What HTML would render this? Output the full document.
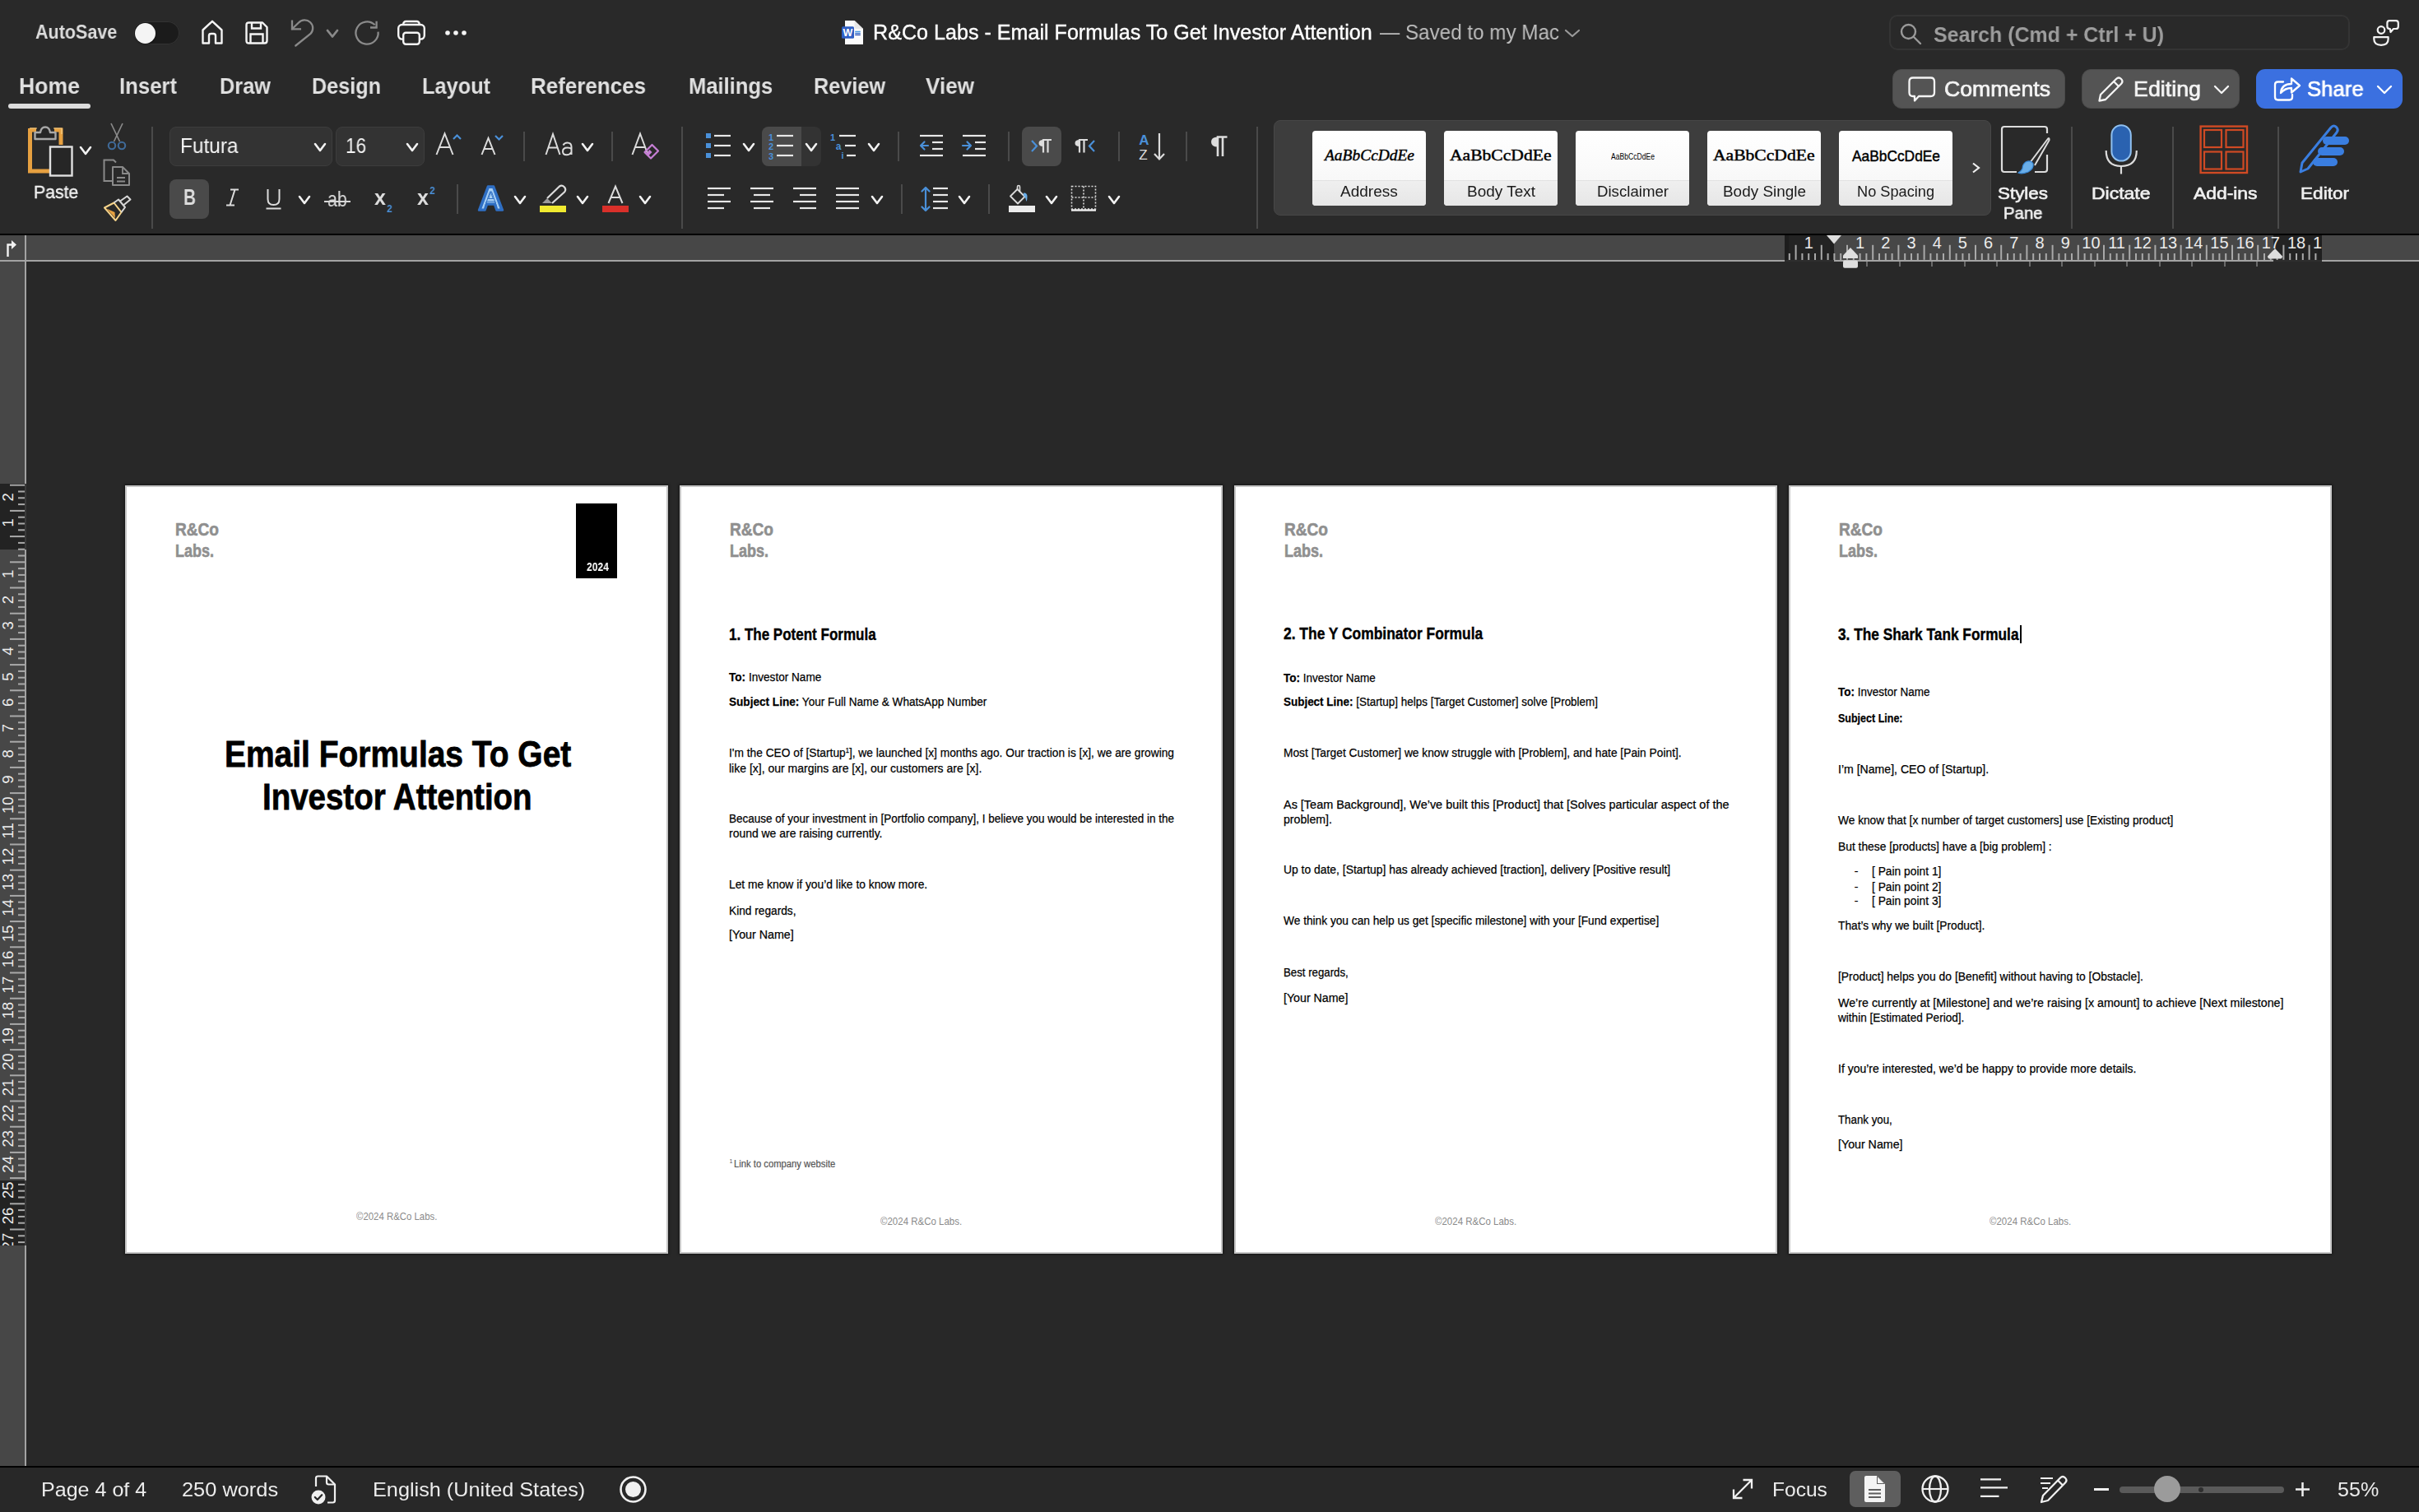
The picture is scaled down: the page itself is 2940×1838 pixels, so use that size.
<!DOCTYPE html><html><head><meta charset="utf-8"><style>

html,body{margin:0;padding:0;}
body{width:2940px;height:1838px;position:relative;overflow:hidden;background:#282828;font-family:'Liberation Sans',sans-serif;}
.t{position:absolute;white-space:nowrap;line-height:1.117em;transform-origin:0 0;will-change:transform;}
.d{will-change:auto;}
svg{overflow:visible}

</style></head><body>
<div style="position:absolute;left:0px;top:0px;width:2940px;height:284px;background:#292929;"></div>
<div style="position:absolute;left:0px;top:284px;width:2940px;height:2px;background:#000;"></div>
<div style="position:absolute;left:0px;top:286px;width:2940px;height:30px;background:#474747;"></div>
<div style="position:absolute;left:0px;top:316px;width:2940px;height:2px;background:#a3a3a3;"></div>
<div style="position:absolute;left:0px;top:318px;width:2940px;height:1464px;background:#282828;"></div>
<div style="position:absolute;left:0px;top:318px;width:30px;height:1464px;background:#474747;"></div>
<div style="position:absolute;left:30px;top:286px;width:2px;height:1496px;background:#a3a3a3;"></div>
<div style="position:absolute;left:0px;top:1782px;width:2940px;height:2px;background:#000;"></div>
<div style="position:absolute;left:0px;top:1784px;width:2940px;height:54px;background:#282828;"></div>
<div style="position:absolute;left:152px;top:590px;width:660px;height:934px;background:transparent;box-shadow:0 0 3px 1px rgba(0,0,0,0.45);"></div>
<div style="position:absolute;left:152px;top:590px;width:660px;height:934px;background:#fff;box-sizing:border-box;border:2px solid #c6c6c6;"></div>
<div style="position:absolute;left:826px;top:590px;width:660px;height:934px;background:transparent;box-shadow:0 0 3px 1px rgba(0,0,0,0.45);"></div>
<div style="position:absolute;left:826px;top:590px;width:660px;height:934px;background:#fff;box-sizing:border-box;border:2px solid #c6c6c6;"></div>
<div style="position:absolute;left:1500px;top:590px;width:660px;height:934px;background:transparent;box-shadow:0 0 3px 1px rgba(0,0,0,0.45);"></div>
<div style="position:absolute;left:1500px;top:590px;width:660px;height:934px;background:#fff;box-sizing:border-box;border:2px solid #c6c6c6;"></div>
<div style="position:absolute;left:2174px;top:590px;width:660px;height:934px;background:transparent;box-shadow:0 0 3px 1px rgba(0,0,0,0.45);"></div>
<div style="position:absolute;left:2174px;top:590px;width:660px;height:934px;background:#fff;box-sizing:border-box;border:2px solid #c6c6c6;"></div>
<div style="position:absolute;left:700px;top:612px;width:50px;height:91px;background:#000;"></div>
<div style="position:absolute;left:2455px;top:760px;width:2px;height:22px;background:#000;"></div>
<div style="position:absolute;left:162px;top:26px;width:56px;height:28px;border-radius:14px;background:#1b1b1b;box-shadow:inset 0 0 0 1px #333"></div>
<div style="position:absolute;left:164px;top:27.5px;width:25px;height:25px;border-radius:50%;background:#f4f4f4;box-shadow:0 1px 2px rgba(0,0,0,.5)"></div>
<svg style="position:absolute;left:244px;top:24px;" width="28" height="30" viewBox="0 0 28 30"><path d="M2.5 28.5 V12.5 L14 1.8 L25.5 12.5 V28.5 H18 V19.5 Q18 17 15.5 17 H12.5 Q10 17 10 19.5 V28.5 Z" fill="none" stroke="#f4f4f4" stroke-width="2.4" stroke-linejoin="round"/></svg>
<svg style="position:absolute;left:298px;top:26px;" width="28" height="28" viewBox="0 0 28 28"><path d="M4 1.5 H21 L26.5 7 V23.5 Q26.5 26.5 23.5 26.5 H4.5 Q1.5 26.5 1.5 23.5 V4.5 Q1.5 1.5 4.5 1.5 Z" fill="none" stroke="#f4f4f4" stroke-width="2.4" stroke-linejoin="round"/><path d="M8 1.5 V8.5 H19 V1.5" fill="none" stroke="#f4f4f4" stroke-width="2.4"/><path d="M6.5 26.5 V15.5 H21.5 V26.5" fill="none" stroke="#f4f4f4" stroke-width="2.4"/></svg>
<svg style="position:absolute;left:354px;top:24px;" width="27" height="33" viewBox="0 0 27 33"><path d="M1 0.5 V11.3 H12" fill="none" stroke="#8a8a8a" stroke-width="2.3"/><path d="M1 11.3 L9 3.5 A9.9 9.9 0 0 1 23.5 17 L5.3 31.5" fill="none" stroke="#8a8a8a" stroke-width="2.3" stroke-linecap="round"/></svg>
<svg style="position:absolute;left:396px;top:35px;" width="16" height="11.5" viewBox="0 0 16 11.5"><path d="M2 2 L8.0 9.5 L14 2" fill="none" stroke="#8a8a8a" stroke-width="2.8" stroke-linecap="round" stroke-linejoin="round"/></svg>
<svg style="position:absolute;left:432px;top:26px;" width="30" height="30" viewBox="0 0 30 30"><path d="M27.6 12.6 A13.6 13.6 0 1 1 23.6 4.3" fill="none" stroke="#8a8a8a" stroke-width="2.3"/><path d="M25.6 -0.3 V7.5 H18" fill="none" stroke="#8a8a8a" stroke-width="2.3"/></svg>
<svg style="position:absolute;left:483px;top:25px;" width="34" height="30" viewBox="0 0 34 30"><rect x="7.3" y="1" width="19.3" height="10" rx="3" fill="none" stroke="#f4f4f4" stroke-width="2.4"/><rect x="1.2" y="5" width="31.6" height="17.6" rx="4.5" fill="#292929" stroke="#f4f4f4" stroke-width="2.4"/><rect x="7.2" y="14.8" width="19.6" height="14" rx="3" fill="#292929" stroke="#f4f4f4" stroke-width="2.4"/></svg>
<svg style="position:absolute;left:540px;top:36px;" width="28" height="8" viewBox="0 0 28 8"><circle cx="4" cy="4" r="2.8" fill="#f4f4f4"/><circle cx="14" cy="4" r="2.8" fill="#f4f4f4"/><circle cx="24" cy="4" r="2.8" fill="#f4f4f4"/></svg>
<svg style="position:absolute;left:1022px;top:24px;" width="28" height="31" viewBox="0 0 28 31"><path d="M5 1 H16.6 L27 11 V30 H5 Z" fill="#fbfbfb"/><path d="M16.6 1 V9 Q16.6 11 18.6 11 H27" fill="#e8e8e8"/><rect x="1" y="8.2" width="15" height="14.6" rx="1.5" fill="#2f5fc4"/><text x="8.5" y="20.2" font-family="Liberation Sans" font-weight="700" font-size="12.5" fill="#fff" text-anchor="middle">W</text><path d="M17.2 14.4 H23.8" stroke="#4a9ae0" stroke-width="1.3"/><path d="M17.2 16.4 H23.8" stroke="#2f6fd0" stroke-width="1.3"/><path d="M17.2 18.4 H23.8" stroke="#2048b0" stroke-width="1.3"/></svg>
<svg style="position:absolute;left:1901px;top:35px;" width="20" height="11" viewBox="0 0 20 11"><path d="M2 2 L10.0 9 L18 2" fill="none" stroke="#9a9a9a" stroke-width="2.2" stroke-linecap="round" stroke-linejoin="round"/></svg>
<div style="position:absolute;left:2296px;top:18px;width:560px;height:43px;box-sizing:border-box;border-radius:10px;border:2px solid #343434;background:#292929"></div>
<svg style="position:absolute;left:2309px;top:28px;" width="27" height="26" viewBox="0 0 27 26"><circle cx="10.5" cy="10.5" r="8.5" fill="none" stroke="#9a9a9a" stroke-width="2.4"/><path d="M16.5 16.5 L25 25" stroke="#9a9a9a" stroke-width="2.4" stroke-linecap="round"/></svg>
<svg style="position:absolute;left:2883px;top:23px;" width="34" height="34" viewBox="0 0 34 34"><circle cx="11" cy="13.5" r="4.3" fill="none" stroke="#f4f4f4" stroke-width="2.2"/><path d="M2.3 22.2 H19.6 V24.5 Q19.6 31.8 11 31.8 Q2.3 31.8 2.3 24.5 Z" fill="none" stroke="#f4f4f4" stroke-width="2.2" stroke-linejoin="round"/><path d="M21 2.1 H29 Q31.8 2.1 31.8 5 V9.2 Q31.8 12 29 12 H26 L22.5 16 L21.8 12 Q18.4 12 18.4 9.2 V5 Q18.4 2.1 21 2.1 Z" fill="none" stroke="#f4f4f4" stroke-width="2.2" stroke-linejoin="round"/></svg>
<div style="position:absolute;left:10px;top:126px;width:100px;height:6px;border-radius:3px;background:#dcdcdc"></div>
<div style="position:absolute;left:2300px;top:84px;width:210px;height:48px;box-sizing:border-box;border-radius:11px;background:#545454;border:1px solid #4a4a4a"></div>
<svg style="position:absolute;left:2319px;top:93px;" width="34" height="32" viewBox="0 0 34 32"><path d="M6 1.5 H27.5 Q32 1.5 32 6 V19.5 Q32 24 27.5 24 H13 L8 29.5 V24 H6 Q1.5 24 1.5 19.5 V6 Q1.5 1.5 6 1.5 Z" fill="none" stroke="#f4f4f4" stroke-width="2.3" stroke-linejoin="round"/></svg>
<div style="position:absolute;left:2530px;top:84px;width:192px;height:48px;box-sizing:border-box;border-radius:11px;background:#545454;border:1px solid #4a4a4a"></div>
<svg style="position:absolute;left:2549px;top:92px;" width="34" height="33" viewBox="0 0 34 33"><path d="M2.5 30.5 L4 23 L23 4 Q26 1 29 4 Q32 7 29 10 L10 29 Z" fill="none" stroke="#f4f4f4" stroke-width="2.3" stroke-linejoin="round"/><path d="M20 7 L26 13" stroke="#f4f4f4" stroke-width="2.3"/></svg>
<svg style="position:absolute;left:2690px;top:103px;" width="20" height="12" viewBox="0 0 20 12"><path d="M2 2 L10.0 10 L18 2" fill="none" stroke="#f4f4f4" stroke-width="2.3" stroke-linecap="round" stroke-linejoin="round"/></svg>
<div style="position:absolute;left:2742px;top:84px;width:178px;height:48px;border-radius:11px;background:#3b70e0"></div>
<svg style="position:absolute;left:2763px;top:91px;" width="34" height="32" viewBox="0 0 34 32"><path d="M12 8.5 H5.5 Q2 8.5 2 12 V27 Q2 30.5 5.5 30.5 H19.5 Q23 30.5 23 27 V24" fill="none" stroke="#fff" stroke-width="2.3" stroke-linecap="round"/><path d="M9 22 Q10 11 22 11 V4.5 L32 13 L22 21.5 V16 Q14 16 9 22 Z" fill="none" stroke="#fff" stroke-width="2.3" stroke-linejoin="round"/></svg>
<svg style="position:absolute;left:2888px;top:103px;" width="20" height="12" viewBox="0 0 20 12"><path d="M2 2 L10.0 10 L18 2" fill="none" stroke="#fff" stroke-width="2.3" stroke-linecap="round" stroke-linejoin="round"/></svg>
<svg style="position:absolute;left:33px;top:153px;" width="58" height="62" viewBox="0 0 58 62">
<path d="M3.5 5 H11 M33 5 H41 V23" fill="none" stroke="#e6a040" stroke-width="5"/>
<path d="M3.5 3 V55 H27" fill="none" stroke="#e6a040" stroke-width="5"/>
<path d="M3 3 H12 M32 3 H42 V10" fill="none" stroke="#f7d089" stroke-width="1.2"/>
<path d="M9.5 16 V8 H16 Q17 1.5 22 1.5 Q27 1.5 28 8 H34.5 V16 Z" fill="#262626" stroke="#a8a8a8" stroke-width="2.4" stroke-linejoin="round"/>
<rect x="28" y="25.5" width="26.5" height="35" fill="#262626" stroke="#e0e0e0" stroke-width="2.4"/>
</svg>
<svg style="position:absolute;left:96px;top:177px;" width="16" height="12" viewBox="0 0 16 12"><path d="M2 2 L8.0 10 L14 2" fill="none" stroke="#f2f2f2" stroke-width="2.6" stroke-linecap="round" stroke-linejoin="round"/></svg>
<svg style="position:absolute;left:130px;top:149px;" width="24" height="34" viewBox="0 0 24 34"><path d="M5 1 L15.5 23 M19 1 L8.5 23" stroke="#8a8a8a" stroke-width="1.7"/><circle cx="6" cy="28" r="4.2" fill="none" stroke="#3f6a98" stroke-width="2.1"/><circle cx="18" cy="28" r="4.2" fill="none" stroke="#3f6a98" stroke-width="2.1"/></svg>
<svg style="position:absolute;left:125px;top:193px;" width="34" height="34" viewBox="0 0 34 34"><path d="M13 27 H1.5 V1.5 H13 L16 4.5" fill="none" stroke="#8a8a8a" stroke-width="2"/><path d="M12 10 H24 L32 18 V32 H12 Z" fill="none" stroke="#8a8a8a" stroke-width="2" stroke-linejoin="round"/><path d="M24 10 V18 H32 M17 23 H27 M17 27.5 H27" fill="none" stroke="#8a8a8a" stroke-width="1.8"/></svg>
<svg style="position:absolute;left:125px;top:237px;" width="35" height="33" viewBox="0 0 35 33"><path d="M2 15.5 L13.5 9.5 L22.5 21 L15.5 31 Z" fill="none" stroke="#f5d38a" stroke-width="2" stroke-linejoin="round"/><path d="M4.5 16.5 L14.5 21 L15 28 Z" fill="#e6a040"/><path d="M13.5 9.5 L19 5.5 L27 15 L22.5 21" fill="none" stroke="#d8d8d8" stroke-width="2" stroke-linejoin="round"/><path d="M21 7.5 L29.5 1.5 L33.5 5.5 L25 12.5" fill="none" stroke="#d8d8d8" stroke-width="2" stroke-linejoin="round"/></svg>
<div style="position:absolute;left:184px;top:154px;width:2px;height:124px;background:#4a4a4a;"></div>
<div style="position:absolute;left:206px;top:154px;width:198px;height:48px;box-sizing:border-box;border-radius:8px;background:#333333;border:1px solid #3d3d3d"></div>
<svg style="position:absolute;left:381px;top:173px;" width="16" height="12" viewBox="0 0 16 12"><path d="M2 2 L8.0 10 L14 2" fill="none" stroke="#f2f2f2" stroke-width="2.6" stroke-linecap="round" stroke-linejoin="round"/></svg>
<div style="position:absolute;left:408px;top:154px;width:108px;height:48px;box-sizing:border-box;border-radius:8px;background:#333333;border:1px solid #3d3d3d"></div>
<svg style="position:absolute;left:493px;top:173px;" width="16" height="12" viewBox="0 0 16 12"><path d="M2 2 L8.0 10 L14 2" fill="none" stroke="#f2f2f2" stroke-width="2.6" stroke-linecap="round" stroke-linejoin="round"/></svg>
<svg style="position:absolute;left:529px;top:161px;" width="34" height="28" viewBox="0 0 34 28"><path d="M1.5 27 L11.5 1.5 L21.5 27 M5.5 18 H17.5" fill="none" stroke="#dcdcdc" stroke-width="2"/><path d="M22 8 L26.5 3.5 L31 8" fill="none" stroke="#4a90d9" stroke-width="2.2"/></svg>
<svg style="position:absolute;left:584px;top:163px;" width="30" height="26" viewBox="0 0 30 26"><path d="M1.5 25 L9.5 5 L17.5 25 M4.8 18 H14.2" fill="none" stroke="#dcdcdc" stroke-width="2"/><path d="M18 2 L22.5 6.5 L27 2" fill="none" stroke="#4a90d9" stroke-width="2.2"/></svg>
<div style="position:absolute;left:636px;top:160px;width:2px;height:36px;background:#4a4a4a;"></div>
<svg style="position:absolute;left:662px;top:161px;" width="34" height="28" viewBox="0 0 34 28"><path d="M1.5 27 L10 2 L18.5 27 M4.5 18.5 H15.5" fill="none" stroke="#dcdcdc" stroke-width="2"/><path d="M22.5 15.5 Q24 12.5 27.5 12.5 Q32.5 12.5 32.5 17.5 V27 M32.5 20 Q31 18.5 27.5 18.5 Q22 18.5 22 23 Q22 27.3 26.5 27.3 Q30.5 27.3 32.5 24" fill="none" stroke="#dcdcdc" stroke-width="2"/></svg>
<svg style="position:absolute;left:706px;top:173px;" width="16" height="12" viewBox="0 0 16 12"><path d="M2 2 L8.0 10 L14 2" fill="none" stroke="#f2f2f2" stroke-width="2.6" stroke-linecap="round" stroke-linejoin="round"/></svg>
<div style="position:absolute;left:743px;top:160px;width:2px;height:36px;background:#4a4a4a;"></div>
<svg style="position:absolute;left:767px;top:161px;" width="35" height="34" viewBox="0 0 35 34"><path d="M1.5 27 L11 1.5 L20.5 27 M5 18 H17" fill="none" stroke="#dcdcdc" stroke-width="2"/><path d="M16.5 24 L25.5 15 L33 22.5 L24 31.5 Z" fill="none" stroke="#c77fd6" stroke-width="2.2" stroke-linejoin="round"/><path d="M18 25.5 L22.5 21 L25.5 24 L21 28.5 Z" fill="#c77fd6"/></svg>
<div style="position:absolute;left:206px;top:218px;width:48px;height:48px;border-radius:8px;background:#4a4a4a"></div>
<svg style="position:absolute;left:274px;top:229px;" width="17" height="22" viewBox="0 0 17 22"><path d="M6 1.5 H16 M1 20.5 H11 M11.5 1.5 L5.5 20.5" fill="none" stroke="#dcdcdc" stroke-width="2"/></svg>
<svg style="position:absolute;left:323px;top:229px;" width="20" height="26" viewBox="0 0 20 26"><path d="M2.5 1 V13 Q2.5 20 9.5 20 Q16.5 20 16.5 13 V1" fill="none" stroke="#dcdcdc" stroke-width="2"/><path d="M0.5 24.5 H18.5" stroke="#dcdcdc" stroke-width="2"/></svg>
<svg style="position:absolute;left:362px;top:237px;" width="16" height="12" viewBox="0 0 16 12"><path d="M2 2 L8.0 10 L14 2" fill="none" stroke="#f2f2f2" stroke-width="2.6" stroke-linecap="round" stroke-linejoin="round"/></svg>
<div style="position:absolute;left:393.8px;top:244px;width:32.3px;height:2px;background:#d8d8d8;"></div>
<div style="position:absolute;left:555px;top:224px;width:2px;height:36px;background:#4a4a4a;"></div>
<svg style="position:absolute;left:580px;top:225px;" width="33" height="32" viewBox="0 0 33 32"><path d="M2 30.5 L13 1.5 H20 L31 30.5 H23.5 L21 23.5 H12 L9.5 30.5 Z" fill="#2f6fc4" stroke="#2f6fc4" stroke-width="2.4" stroke-linejoin="round"/><path d="M5.5 28.5 L14.5 4 H18.5 L27.5 28.5 H25 L22.5 21.5 H10.5 L8 28.5 Z" fill="#a8d0f5"/><path d="M9 27 L15.5 8 H17.5 L24 27 H23.5 L21.8 20 H11.2 L9.5 27 Z" fill="none" stroke="#2f6fc4" stroke-width="1"/><path d="M13 17 L16.5 7.5 L20 17 Z" fill="#2f6fc4"/><path d="M14.3 16 L16.5 10 L18.7 16 Z" fill="#a8d0f5"/></svg>
<svg style="position:absolute;left:624px;top:237px;" width="16" height="12" viewBox="0 0 16 12"><path d="M2 2 L8.0 10 L14 2" fill="none" stroke="#f2f2f2" stroke-width="2.6" stroke-linecap="round" stroke-linejoin="round"/></svg>
<svg style="position:absolute;left:655px;top:225px;" width="34" height="34" viewBox="0 0 34 34"><path d="M4 22 L10 16 L16 22 Z" fill="#9a9a9a"/><path d="M10 16 L25 1.5 Q28 -0.5 31 2.5 Q33.5 5.5 31 8.5 L16 22" fill="none" stroke="#dcdcdc" stroke-width="2.2" stroke-linejoin="round"/><rect x="1" y="25" width="32" height="8" fill="#f0ea30"/></svg>
<svg style="position:absolute;left:700px;top:237px;" width="16" height="12" viewBox="0 0 16 12"><path d="M2 2 L8.0 10 L14 2" fill="none" stroke="#f2f2f2" stroke-width="2.6" stroke-linecap="round" stroke-linejoin="round"/></svg>
<svg style="position:absolute;left:731px;top:225px;" width="34" height="34" viewBox="0 0 34 34"><path d="M8.5 22 L17 1.5 L25.5 22 M11.5 15 H22.5" fill="none" stroke="#dcdcdc" stroke-width="2"/><rect x="1" y="25" width="32" height="8" fill="#d9302a"/></svg>
<svg style="position:absolute;left:776px;top:237px;" width="16" height="12" viewBox="0 0 16 12"><path d="M2 2 L8.0 10 L14 2" fill="none" stroke="#f2f2f2" stroke-width="2.6" stroke-linecap="round" stroke-linejoin="round"/></svg>
<div style="position:absolute;left:828px;top:154px;width:2px;height:124px;background:#4a4a4a;"></div>
<svg style="position:absolute;left:857px;top:162px;" width="32" height="30" viewBox="0 0 32 30"><rect x="1" y="0" width="6" height="6" fill="#4a90d9"/><path d="M11 3 H31" stroke="#e8e8e8" stroke-width="2.2"/><rect x="1" y="12" width="6" height="6" fill="#4a90d9"/><path d="M11 15 H31" stroke="#e8e8e8" stroke-width="2.2"/><rect x="1" y="24" width="6" height="6" fill="#4a90d9"/><path d="M11 27 H31" stroke="#e8e8e8" stroke-width="2.2"/></svg>
<svg style="position:absolute;left:902px;top:173px;" width="16" height="12" viewBox="0 0 16 12"><path d="M2 2 L8.0 10 L14 2" fill="none" stroke="#f2f2f2" stroke-width="2.6" stroke-linecap="round" stroke-linejoin="round"/></svg>
<div style="position:absolute;left:926px;top:154px;width:72px;height:48px;border-radius:8px;background:#333333"></div>
<div style="position:absolute;left:926px;top:154px;width:48px;height:48px;border-radius:8px 0 0 8px;background:#4a4a4a"></div>
<svg style="position:absolute;left:932px;top:160px;" width="34" height="36" viewBox="0 0 34 36"><text x="5" y="10.5" font-family="Liberation Sans" font-size="11" font-weight="700" fill="#4a90d9" text-anchor="middle">1</text><text x="5" y="22" font-family="Liberation Sans" font-size="11" font-weight="700" fill="#4a90d9" text-anchor="middle">2</text><text x="5" y="33.5" font-family="Liberation Sans" font-size="11" font-weight="700" fill="#4a90d9" text-anchor="middle">3</text><path d="M12 5 H32" stroke="#e8e8e8" stroke-width="2.2"/><path d="M12 17 H32" stroke="#e8e8e8" stroke-width="2.2"/><path d="M12 29 H32" stroke="#e8e8e8" stroke-width="2.2"/></svg>
<svg style="position:absolute;left:978px;top:173px;" width="16" height="12" viewBox="0 0 16 12"><path d="M2 2 L8.0 10 L14 2" fill="none" stroke="#f2f2f2" stroke-width="2.6" stroke-linecap="round" stroke-linejoin="round"/></svg>
<svg style="position:absolute;left:1008px;top:160px;" width="34" height="36" viewBox="0 0 34 36"><text x="4" y="10.5" font-family="Liberation Sans" font-size="11" font-weight="700" fill="#4a90d9" text-anchor="middle">1</text><text x="11" y="21.5" font-family="Liberation Sans" font-size="12" font-weight="700" fill="#4a90d9" text-anchor="middle">a</text><text x="16" y="32.5" font-family="Liberation Sans" font-size="11" font-weight="700" fill="#4a90d9" text-anchor="middle">i</text><path d="M12 5 H32" stroke="#e8e8e8" stroke-width="2.2"/><path d="M19 17 H32" stroke="#e8e8e8" stroke-width="2.2"/><path d="M21 29 H32" stroke="#e8e8e8" stroke-width="2.2"/></svg>
<svg style="position:absolute;left:1054px;top:173px;" width="16" height="12" viewBox="0 0 16 12"><path d="M2 2 L8.0 10 L14 2" fill="none" stroke="#f2f2f2" stroke-width="2.6" stroke-linecap="round" stroke-linejoin="round"/></svg>
<div style="position:absolute;left:1091px;top:160px;width:2px;height:36px;background:#4a4a4a;"></div>
<svg style="position:absolute;left:1117px;top:162px;" width="30" height="30" viewBox="0 0 30 30"><path d="M1 3 H29" stroke="#e8e8e8" stroke-width="2.2"/><path d="M1 27 H29" stroke="#e8e8e8" stroke-width="2.2"/><path d="M16 11 H29" stroke="#e8e8e8" stroke-width="2.2"/><path d="M16 19 H29" stroke="#e8e8e8" stroke-width="2.2"/><path d="M11 15 H2 M6.5 10.5 L2 15 L6.5 19.5" fill="none" stroke="#4a90d9" stroke-width="2.2" stroke-linecap="round" stroke-linejoin="round"/></svg>
<svg style="position:absolute;left:1169px;top:162px;" width="30" height="30" viewBox="0 0 30 30"><path d="M1 3 H29" stroke="#e8e8e8" stroke-width="2.2"/><path d="M1 27 H29" stroke="#e8e8e8" stroke-width="2.2"/><path d="M16 11 H29" stroke="#e8e8e8" stroke-width="2.2"/><path d="M16 19 H29" stroke="#e8e8e8" stroke-width="2.2"/><path d="M1 15 H11 M6.5 10.5 L11 15 L6.5 19.5" fill="none" stroke="#4a90d9" stroke-width="2.2" stroke-linecap="round" stroke-linejoin="round"/></svg>
<div style="position:absolute;left:1225px;top:160px;width:2px;height:36px;background:#4a4a4a;"></div>
<div style="position:absolute;left:1242px;top:154px;width:48px;height:48px;border-radius:8px;background:#4a4a4a"></div>
<svg style="position:absolute;left:1252px;top:168px;" width="28" height="20" viewBox="0 0 28 20"><path d="M2 3 L8 9.5 L2 16" fill="none" stroke="#4a90d9" stroke-width="2.2"/><path d="M16 17.5 V2 H26 M21.5 2 V17.5" fill="none" stroke="#dcdcdc" stroke-width="2.2"/><path d="M16 2 Q10.5 2 10.5 6 Q10.5 10 16 10 Z" fill="#dcdcdc"/></svg>
<svg style="position:absolute;left:1305px;top:168px;" width="28" height="20" viewBox="0 0 28 20"><path d="M7 17.5 V2 H17 M12.5 2 V17.5" fill="none" stroke="#dcdcdc" stroke-width="2.2"/><path d="M7 2 Q1.5 2 1.5 6 Q1.5 10 7 10 Z" fill="#dcdcdc"/><path d="M25 3 L19 9.5 L25 16" fill="none" stroke="#4a90d9" stroke-width="2.2"/></svg>
<div style="position:absolute;left:1359px;top:160px;width:2px;height:36px;background:#4a4a4a;"></div>
<svg style="position:absolute;left:1383px;top:161px;" width="35" height="34" viewBox="0 0 35 34"><text x="7.5" y="15" font-family="Liberation Sans" font-size="17" font-weight="700" fill="#4a90d9" text-anchor="middle">A</text><text x="6.5" y="33" font-family="Liberation Sans" font-size="17" fill="#dcdcdc" text-anchor="middle">Z</text><path d="M26 1 V32 M20 26 L26 32.5 L32 26" fill="none" stroke="#dcdcdc" stroke-width="2.2"/></svg>
<div style="position:absolute;left:1441px;top:160px;width:2px;height:36px;background:#4a4a4a;"></div>
<svg style="position:absolute;left:1471px;top:165px;" width="22" height="26" viewBox="0 0 22 26"><path d="M9 25 V1.5 H20.5 M15 1.5 V25" fill="none" stroke="#dcdcdc" stroke-width="2.6"/><path d="M9 1.5 Q1 1.5 1 7.5 Q1 13.5 9 13.5 Z" fill="#dcdcdc"/></svg>
<svg style="position:absolute;left:860px;top:227px;" width="28" height="28" viewBox="0 0 28 28"><path d="M0 2 H28" stroke="#e8e8e8" stroke-width="2.2"/><path d="M0 10 H20" stroke="#e8e8e8" stroke-width="2.2"/><path d="M0 18 H28" stroke="#e8e8e8" stroke-width="2.2"/><path d="M0 26 H20" stroke="#e8e8e8" stroke-width="2.2"/></svg>
<svg style="position:absolute;left:912px;top:227px;" width="28" height="28" viewBox="0 0 28 28"><path d="M0 2 H28" stroke="#e8e8e8" stroke-width="2.2"/><path d="M4 10 H24" stroke="#e8e8e8" stroke-width="2.2"/><path d="M0 18 H28" stroke="#e8e8e8" stroke-width="2.2"/><path d="M4 26 H24" stroke="#e8e8e8" stroke-width="2.2"/></svg>
<svg style="position:absolute;left:964px;top:227px;" width="28" height="28" viewBox="0 0 28 28"><path d="M0 2 H28" stroke="#e8e8e8" stroke-width="2.2"/><path d="M8 10 H28" stroke="#e8e8e8" stroke-width="2.2"/><path d="M0 18 H28" stroke="#e8e8e8" stroke-width="2.2"/><path d="M8 26 H28" stroke="#e8e8e8" stroke-width="2.2"/></svg>
<svg style="position:absolute;left:1016px;top:227px;" width="28" height="28" viewBox="0 0 28 28"><path d="M0 2 H28" stroke="#e8e8e8" stroke-width="2.2"/><path d="M0 10 H28" stroke="#e8e8e8" stroke-width="2.2"/><path d="M0 18 H28" stroke="#e8e8e8" stroke-width="2.2"/><path d="M0 26 H28" stroke="#e8e8e8" stroke-width="2.2"/></svg>
<svg style="position:absolute;left:1058px;top:237px;" width="16" height="12" viewBox="0 0 16 12"><path d="M2 2 L8.0 10 L14 2" fill="none" stroke="#f2f2f2" stroke-width="2.6" stroke-linecap="round" stroke-linejoin="round"/></svg>
<div style="position:absolute;left:1095px;top:224px;width:2px;height:36px;background:#4a4a4a;"></div>
<svg style="position:absolute;left:1119px;top:226px;" width="34" height="32" viewBox="0 0 34 32"><path d="M6 2 V30 M1.5 6.5 L6 2 L10.5 6.5 M1.5 25.5 L6 30 L10.5 25.5" fill="none" stroke="#4a90d9" stroke-width="2.2" stroke-linecap="round" stroke-linejoin="round"/><path d="M15 3 H33" stroke="#e8e8e8" stroke-width="2.2"/><path d="M15 11 H33" stroke="#e8e8e8" stroke-width="2.2"/><path d="M15 19 H33" stroke="#e8e8e8" stroke-width="2.2"/><path d="M15 27 H33" stroke="#e8e8e8" stroke-width="2.2"/></svg>
<svg style="position:absolute;left:1164px;top:237px;" width="16" height="12" viewBox="0 0 16 12"><path d="M2 2 L8.0 10 L14 2" fill="none" stroke="#f2f2f2" stroke-width="2.6" stroke-linecap="round" stroke-linejoin="round"/></svg>
<div style="position:absolute;left:1201px;top:224px;width:2px;height:36px;background:#4a4a4a;"></div>
<svg style="position:absolute;left:1225px;top:225px;" width="34" height="34" viewBox="0 0 34 34"><path d="M3 13.5 L11.5 5 L20.5 14 L12 22.5 Z" fill="none" stroke="#dcdcdc" stroke-width="1.8" stroke-linejoin="round"/><path d="M11.5 5 V2 Q11.5 0.5 13 0.5 Q14.5 0.5 14.5 2 V9" fill="none" stroke="#dcdcdc" stroke-width="1.6"/><path d="M19 9.5 Q23.5 9 23.5 14 Q23.5 18 22.5 20 Q21.5 15 19 12.5 Z" fill="#6aaee8"/><rect x="1" y="25" width="32" height="8" fill="#ececec"/></svg>
<svg style="position:absolute;left:1270px;top:237px;" width="16" height="12" viewBox="0 0 16 12"><path d="M2 2 L8.0 10 L14 2" fill="none" stroke="#f2f2f2" stroke-width="2.6" stroke-linecap="round" stroke-linejoin="round"/></svg>
<svg style="position:absolute;left:1301px;top:225px;" width="32" height="33" viewBox="0 0 32 33"><rect x="1.5" y="1.5" width="29" height="27.5" fill="none" stroke="#dcdcdc" stroke-width="1.6" stroke-dasharray="2 2"/><path d="M16 1.5 V29 M1.5 15 H30.5" stroke="#dcdcdc" stroke-width="1.6" stroke-dasharray="2 2"/><path d="M1 30.5 H31" stroke="#f0f0f0" stroke-width="2.4"/></svg>
<svg style="position:absolute;left:1346px;top:237px;" width="16" height="12" viewBox="0 0 16 12"><path d="M2 2 L8.0 10 L14 2" fill="none" stroke="#f2f2f2" stroke-width="2.6" stroke-linecap="round" stroke-linejoin="round"/></svg>
<div style="position:absolute;left:1527px;top:154px;width:2px;height:124px;background:#4a4a4a;"></div>
<div style="position:absolute;left:1548px;top:146px;width:872px;height:116px;box-sizing:border-box;border-radius:8px;background:#3d3d3d;border:1px solid #474747"></div>
<div style="position:absolute;left:1595px;top:159px;width:138px;height:91px;border-radius:4px;background:linear-gradient(#ffffff,#fafafa 50%,#f3f3f3);overflow:hidden"><div style="position:absolute;left:0;top:60px;width:138px;height:31px;background:linear-gradient(#efefef,#e6e6e6);border-top:1px solid #e2e2e2"></div></div>
<div style="position:absolute;left:1755px;top:159px;width:138px;height:91px;border-radius:4px;background:linear-gradient(#ffffff,#fafafa 50%,#f3f3f3);overflow:hidden"><div style="position:absolute;left:0;top:60px;width:138px;height:31px;background:linear-gradient(#efefef,#e6e6e6);border-top:1px solid #e2e2e2"></div></div>
<div style="position:absolute;left:1915px;top:159px;width:138px;height:91px;border-radius:4px;background:linear-gradient(#ffffff,#fafafa 50%,#f3f3f3);overflow:hidden"><div style="position:absolute;left:0;top:60px;width:138px;height:31px;background:linear-gradient(#efefef,#e6e6e6);border-top:1px solid #e2e2e2"></div></div>
<div style="position:absolute;left:2075px;top:159px;width:138px;height:91px;border-radius:4px;background:linear-gradient(#ffffff,#fafafa 50%,#f3f3f3);overflow:hidden"><div style="position:absolute;left:0;top:60px;width:138px;height:31px;background:linear-gradient(#efefef,#e6e6e6);border-top:1px solid #e2e2e2"></div></div>
<div style="position:absolute;left:2235px;top:159px;width:138px;height:91px;border-radius:4px;background:linear-gradient(#ffffff,#fafafa 50%,#f3f3f3);overflow:hidden"><div style="position:absolute;left:0;top:60px;width:138px;height:31px;background:linear-gradient(#efefef,#e6e6e6);border-top:1px solid #e2e2e2"></div></div>
<svg style="position:absolute;left:2396px;top:197px;" width="12" height="14" viewBox="0 0 12 14"><path d="M2 1.5 L9 7 L2 12.5" fill="none" stroke="#f0f0f0" stroke-width="2.2"/></svg>
<svg style="position:absolute;left:2431px;top:152px;" width="62" height="63" viewBox="0 0 62 63"><path d="M5 2 H54 Q57 2 57 5 V10" fill="none" stroke="#dcdcdc" stroke-width="2.2"/><path d="M2 5 Q2 2 5 2 M2 5 V54 Q2 57 5 57 H20 M42 57 H54 Q57 57 57 54 V36" fill="none" stroke="#dcdcdc" stroke-width="2.2"/><path d="M36 46 L57 18 Q60 14 59.5 18.5 L42 49" fill="none" stroke="#dcdcdc" stroke-width="2"/><path d="M22 58 Q26 60 34 57 Q41 53 40 47 Q37 42 31 45 Q27 48 27 53 Q26 56 22 58 Z" fill="#6aaee8" stroke="#3a8ad8" stroke-width="1.2"/></svg>
<div style="position:absolute;left:2517px;top:154px;width:2px;height:124px;background:#4a4a4a;"></div>
<svg style="position:absolute;left:2558px;top:150px;" width="40" height="64" viewBox="0 0 40 64"><rect x="8.4" y="2.2" width="23.4" height="43.4" rx="11.7" fill="#2a62b0" stroke="#8fc0f0" stroke-width="2"/><path d="M1.7 33 Q1.7 52 20 52 Q38.8 52 38.8 33" fill="none" stroke="#dcdcdc" stroke-width="2.2"/><path d="M20 52 V61.5" stroke="#dcdcdc" stroke-width="2.2"/></svg>
<div style="position:absolute;left:2640px;top:154px;width:2px;height:124px;background:#4a4a4a;"></div>
<svg style="position:absolute;left:2673px;top:152px;" width="60" height="60" viewBox="0 0 60 60"><rect x="1.6" y="1.6" width="56.4" height="56.4" fill="none" stroke="#d04a24" stroke-width="2.4"/><rect x="6" y="6" width="21" height="21" fill="none" stroke="#d04a24" stroke-width="2.2"/><rect x="32.5" y="6" width="21" height="21" fill="none" stroke="#d04a24" stroke-width="2.2"/><rect x="6" y="32.5" width="21" height="21" fill="none" stroke="#d04a24" stroke-width="2.2"/><rect x="32.5" y="32.5" width="21" height="21" fill="none" stroke="#d04a24" stroke-width="2.2"/></svg>
<div style="position:absolute;left:2768px;top:154px;width:2px;height:124px;background:#4a4a4a;"></div>
<svg style="position:absolute;left:2793px;top:150px;" width="64" height="64" viewBox="0 0 64 64"><path d="M3 59 L5 48 L40 5 Q43 1.5 46.5 4.5 Q49.5 7.5 47 11 L12 55 Z" fill="none" stroke="#3a7ee0" stroke-width="3" stroke-linejoin="round"/><rect x="30" y="16" width="32" height="10" rx="5" fill="#3a7ee0"/><rect x="24" y="29" width="32" height="10" rx="5" fill="#3a7ee0"/><rect x="18" y="42" width="30" height="10" rx="5" fill="#3a7ee0"/></svg>
<div style="position:absolute;left:2168.6px;top:286px;width:60.8px;height:30px;background:#232323;"></div>
<div style="position:absolute;left:2168.6px;top:286px;width:5px;height:30px;background:#1d1d1d;"></div>
<div style="position:absolute;left:2224.4px;top:286px;width:5px;height:30px;background:#1f1f1f;"></div>
<div style="position:absolute;left:2763.4px;top:286px;width:58.9px;height:30px;background:#232323;"></div>
<div style="position:absolute;left:2817px;top:286px;width:5.3px;height:30px;background:#1f1f1f;"></div>
<div style="position:absolute;left:2168.6px;top:316px;width:60.8px;height:2px;background:#2e2e2e;"></div>
<div style="position:absolute;left:2763.4px;top:316px;width:58.9px;height:2px;background:#2e2e2e;"></div>
<svg style="position:absolute;left:2168px;top:286px;overflow:hidden" width="656" height="30" viewBox="0 0 656 30"><rect x="5.8" y="22" width="2" height="8" fill="#a9a9a9"/><rect x="13.6" y="11.8" width="2" height="18" fill="#a9a9a9"/><rect x="21.4" y="22" width="2" height="8" fill="#a9a9a9"/><rect x="29.2" y="22" width="2" height="8" fill="#a9a9a9"/><rect x="37.0" y="22" width="2" height="8" fill="#a9a9a9"/><rect x="44.8" y="11.8" width="2" height="18" fill="#a9a9a9"/><rect x="52.6" y="22" width="2" height="8" fill="#a9a9a9"/><rect x="60.4" y="22" width="2" height="8" fill="#a9a9a9"/><rect x="68.2" y="22" width="2" height="8" fill="#a9a9a9"/><rect x="76.0" y="11.8" width="2" height="18" fill="#a9a9a9"/><rect x="83.8" y="22" width="2" height="8" fill="#a9a9a9"/><rect x="91.6" y="22" width="2" height="8" fill="#a9a9a9"/><rect x="99.4" y="22" width="2" height="8" fill="#a9a9a9"/><rect x="107.2" y="11.8" width="2" height="18" fill="#a9a9a9"/><rect x="115.0" y="22" width="2" height="8" fill="#a9a9a9"/><rect x="122.8" y="22" width="2" height="8" fill="#a9a9a9"/><rect x="130.6" y="22" width="2" height="8" fill="#a9a9a9"/><rect x="138.4" y="11.8" width="2" height="18" fill="#a9a9a9"/><rect x="146.2" y="22" width="2" height="8" fill="#a9a9a9"/><rect x="154.0" y="22" width="2" height="8" fill="#a9a9a9"/><rect x="161.8" y="22" width="2" height="8" fill="#a9a9a9"/><rect x="169.6" y="11.8" width="2" height="18" fill="#a9a9a9"/><rect x="177.4" y="22" width="2" height="8" fill="#a9a9a9"/><rect x="185.2" y="22" width="2" height="8" fill="#a9a9a9"/><rect x="193.0" y="22" width="2" height="8" fill="#a9a9a9"/><rect x="200.8" y="11.8" width="2" height="18" fill="#a9a9a9"/><rect x="208.6" y="22" width="2" height="8" fill="#a9a9a9"/><rect x="216.4" y="22" width="2" height="8" fill="#a9a9a9"/><rect x="224.2" y="22" width="2" height="8" fill="#a9a9a9"/><rect x="232.0" y="11.8" width="2" height="18" fill="#a9a9a9"/><rect x="239.8" y="22" width="2" height="8" fill="#a9a9a9"/><rect x="247.6" y="22" width="2" height="8" fill="#a9a9a9"/><rect x="255.4" y="22" width="2" height="8" fill="#a9a9a9"/><rect x="263.2" y="11.8" width="2" height="18" fill="#a9a9a9"/><rect x="271.0" y="22" width="2" height="8" fill="#a9a9a9"/><rect x="278.8" y="22" width="2" height="8" fill="#a9a9a9"/><rect x="286.6" y="22" width="2" height="8" fill="#a9a9a9"/><rect x="294.4" y="11.8" width="2" height="18" fill="#a9a9a9"/><rect x="302.2" y="22" width="2" height="8" fill="#a9a9a9"/><rect x="310.0" y="22" width="2" height="8" fill="#a9a9a9"/><rect x="317.8" y="22" width="2" height="8" fill="#a9a9a9"/><rect x="325.6" y="11.8" width="2" height="18" fill="#a9a9a9"/><rect x="333.4" y="22" width="2" height="8" fill="#a9a9a9"/><rect x="341.2" y="22" width="2" height="8" fill="#a9a9a9"/><rect x="349.0" y="22" width="2" height="8" fill="#a9a9a9"/><rect x="356.8" y="11.8" width="2" height="18" fill="#a9a9a9"/><rect x="364.6" y="22" width="2" height="8" fill="#a9a9a9"/><rect x="372.4" y="22" width="2" height="8" fill="#a9a9a9"/><rect x="380.2" y="22" width="2" height="8" fill="#a9a9a9"/><rect x="388.0" y="11.8" width="2" height="18" fill="#a9a9a9"/><rect x="395.8" y="22" width="2" height="8" fill="#a9a9a9"/><rect x="403.6" y="22" width="2" height="8" fill="#a9a9a9"/><rect x="411.4" y="22" width="2" height="8" fill="#a9a9a9"/><rect x="419.2" y="11.8" width="2" height="18" fill="#a9a9a9"/><rect x="427.0" y="22" width="2" height="8" fill="#a9a9a9"/><rect x="434.8" y="22" width="2" height="8" fill="#a9a9a9"/><rect x="442.6" y="22" width="2" height="8" fill="#a9a9a9"/><rect x="450.4" y="11.8" width="2" height="18" fill="#a9a9a9"/><rect x="458.2" y="22" width="2" height="8" fill="#a9a9a9"/><rect x="466.0" y="22" width="2" height="8" fill="#a9a9a9"/><rect x="473.8" y="22" width="2" height="8" fill="#a9a9a9"/><rect x="481.6" y="11.8" width="2" height="18" fill="#a9a9a9"/><rect x="489.4" y="22" width="2" height="8" fill="#a9a9a9"/><rect x="497.2" y="22" width="2" height="8" fill="#a9a9a9"/><rect x="505.0" y="22" width="2" height="8" fill="#a9a9a9"/><rect x="512.8" y="11.8" width="2" height="18" fill="#a9a9a9"/><rect x="520.6" y="22" width="2" height="8" fill="#a9a9a9"/><rect x="528.4" y="22" width="2" height="8" fill="#a9a9a9"/><rect x="536.2" y="22" width="2" height="8" fill="#a9a9a9"/><rect x="544.0" y="11.8" width="2" height="18" fill="#a9a9a9"/><rect x="551.8" y="22" width="2" height="8" fill="#a9a9a9"/><rect x="559.6" y="22" width="2" height="8" fill="#a9a9a9"/><rect x="567.4" y="22" width="2" height="8" fill="#a9a9a9"/><rect x="575.2" y="11.8" width="2" height="18" fill="#a9a9a9"/><rect x="583.0" y="22" width="2" height="8" fill="#a9a9a9"/><rect x="590.8" y="22" width="2" height="8" fill="#a9a9a9"/><rect x="598.6" y="22" width="2" height="8" fill="#a9a9a9"/><rect x="606.4" y="11.8" width="2" height="18" fill="#a9a9a9"/><rect x="614.2" y="22" width="2" height="8" fill="#a9a9a9"/><rect x="622.0" y="22" width="2" height="8" fill="#a9a9a9"/><rect x="629.8" y="22" width="2" height="8" fill="#a9a9a9"/><rect x="637.6" y="11.8" width="2" height="18" fill="#a9a9a9"/><rect x="645.4" y="22" width="2" height="8" fill="#a9a9a9"/></svg>
<svg style="position:absolute;left:2168px;top:286px;overflow:hidden" width="654.3" height="30" viewBox="0 0 654.3 30"><text x="30.2" y="16" font-family="Liberation Sans" font-size="20" fill="#ececec" text-anchor="middle">1</text><text x="92.6" y="16" font-family="Liberation Sans" font-size="20" fill="#ececec" text-anchor="middle">1</text><text x="123.8" y="16" font-family="Liberation Sans" font-size="20" fill="#ececec" text-anchor="middle">2</text><text x="155.0" y="16" font-family="Liberation Sans" font-size="20" fill="#ececec" text-anchor="middle">3</text><text x="186.2" y="16" font-family="Liberation Sans" font-size="20" fill="#ececec" text-anchor="middle">4</text><text x="217.4" y="16" font-family="Liberation Sans" font-size="20" fill="#ececec" text-anchor="middle">5</text><text x="248.6" y="16" font-family="Liberation Sans" font-size="20" fill="#ececec" text-anchor="middle">6</text><text x="279.8" y="16" font-family="Liberation Sans" font-size="20" fill="#ececec" text-anchor="middle">7</text><text x="311.0" y="16" font-family="Liberation Sans" font-size="20" fill="#ececec" text-anchor="middle">8</text><text x="342.2" y="16" font-family="Liberation Sans" font-size="20" fill="#ececec" text-anchor="middle">9</text><text x="373.4" y="16" font-family="Liberation Sans" font-size="20" fill="#ececec" text-anchor="middle">10</text><text x="404.6" y="16" font-family="Liberation Sans" font-size="20" fill="#ececec" text-anchor="middle">11</text><text x="435.8" y="16" font-family="Liberation Sans" font-size="20" fill="#ececec" text-anchor="middle">12</text><text x="467.0" y="16" font-family="Liberation Sans" font-size="20" fill="#ececec" text-anchor="middle">13</text><text x="498.2" y="16" font-family="Liberation Sans" font-size="20" fill="#ececec" text-anchor="middle">14</text><text x="529.4" y="16" font-family="Liberation Sans" font-size="20" fill="#ececec" text-anchor="middle">15</text><text x="560.6" y="16" font-family="Liberation Sans" font-size="20" fill="#ececec" text-anchor="middle">16</text><text x="591.8" y="16" font-family="Liberation Sans" font-size="20" fill="#ececec" text-anchor="middle">17</text><text x="623.0" y="16" font-family="Liberation Sans" font-size="20" fill="#ececec" text-anchor="middle">18</text><text x="654.2" y="16" font-family="Liberation Sans" font-size="20" fill="#ececec" text-anchor="middle">19</text></svg>
<div style="position:absolute;left:2268.0px;top:318px;width:2px;height:6px;background:#6a6a6a;"></div>
<div style="position:absolute;left:2307.5px;top:318px;width:2px;height:6px;background:#6a6a6a;"></div>
<div style="position:absolute;left:2347.0px;top:318px;width:2px;height:6px;background:#6a6a6a;"></div>
<div style="position:absolute;left:2386.5px;top:318px;width:2px;height:6px;background:#6a6a6a;"></div>
<div style="position:absolute;left:2426.0px;top:318px;width:2px;height:6px;background:#6a6a6a;"></div>
<div style="position:absolute;left:2465.5px;top:318px;width:2px;height:6px;background:#6a6a6a;"></div>
<div style="position:absolute;left:2505.0px;top:318px;width:2px;height:6px;background:#6a6a6a;"></div>
<div style="position:absolute;left:2544.5px;top:318px;width:2px;height:6px;background:#6a6a6a;"></div>
<div style="position:absolute;left:2584.0px;top:318px;width:2px;height:6px;background:#6a6a6a;"></div>
<div style="position:absolute;left:2623.5px;top:318px;width:2px;height:6px;background:#6a6a6a;"></div>
<div style="position:absolute;left:2663.0px;top:318px;width:2px;height:6px;background:#6a6a6a;"></div>
<div style="position:absolute;left:2702.5px;top:318px;width:2px;height:6px;background:#6a6a6a;"></div>
<div style="position:absolute;left:2742.0px;top:318px;width:2px;height:6px;background:#6a6a6a;"></div>
<svg style="position:absolute;left:2219px;top:286px;" width="20" height="11" viewBox="0 0 20 11"><path d="M1 0 H19 L10 10.6 Z" fill="#dedede"/></svg>
<svg style="position:absolute;left:2239px;top:300px;" width="20" height="26" viewBox="0 0 20 26"><path d="M10 1 L19 10.5 V14 H1 V10.5 Z" fill="#dedede"/><rect x="1" y="16.4" width="18" height="9.4" rx="2" fill="#dedede"/></svg>
<svg style="position:absolute;left:2755px;top:300.6px;" width="20" height="14" viewBox="0 0 20 14"><path d="M10 1 L19 10.5 Q19 13.6 16 13.6 H4 Q1 13.6 1 10.5 Z" fill="#dedede"/></svg>
<svg style="position:absolute;left:7px;top:290px;" width="14" height="23" viewBox="0 0 14 23"><path d="M2.5 22 V7.5 H8" fill="none" stroke="#f2f2f2" stroke-width="2.4"/><path d="M7 2 L13 7.5 L7 13 Z" fill="#f2f2f2"/></svg>
<div style="position:absolute;left:0px;top:588.3px;width:30px;height:79.4px;background:#232323;"></div>
<div style="position:absolute;left:0px;top:1435px;width:30px;height:79px;background:#232323;"></div>
<div style="position:absolute;left:30px;top:588.3px;width:2px;height:79.4px;background:#3a3a3a;"></div>
<div style="position:absolute;left:30px;top:1435px;width:2px;height:79px;background:#3a3a3a;"></div>
<svg style="position:absolute;left:0px;top:580px;overflow:hidden;clip-path:inset(8.3px 0 0 0)" width="30" height="934" viewBox="0 0 30 934"><rect x="12" y="8.7" width="18" height="2" fill="#a9a9a9"/><rect x="22" y="16.5" width="8" height="2" fill="#a9a9a9"/><rect x="22" y="24.3" width="8" height="2" fill="#a9a9a9"/><rect x="22" y="32.1" width="8" height="2" fill="#a9a9a9"/><rect x="12" y="39.9" width="18" height="2" fill="#a9a9a9"/><rect x="22" y="47.7" width="8" height="2" fill="#a9a9a9"/><rect x="22" y="55.5" width="8" height="2" fill="#a9a9a9"/><rect x="22" y="63.3" width="8" height="2" fill="#a9a9a9"/><rect x="12" y="71.1" width="18" height="2" fill="#a9a9a9"/><rect x="22" y="78.9" width="8" height="2" fill="#a9a9a9"/><rect x="22" y="86.7" width="8" height="2" fill="#a9a9a9"/><rect x="22" y="94.5" width="8" height="2" fill="#a9a9a9"/><rect x="12" y="102.3" width="18" height="2" fill="#a9a9a9"/><rect x="22" y="110.1" width="8" height="2" fill="#a9a9a9"/><rect x="22" y="117.9" width="8" height="2" fill="#a9a9a9"/><rect x="22" y="125.7" width="8" height="2" fill="#a9a9a9"/><rect x="12" y="133.5" width="18" height="2" fill="#a9a9a9"/><rect x="22" y="141.3" width="8" height="2" fill="#a9a9a9"/><rect x="22" y="149.1" width="8" height="2" fill="#a9a9a9"/><rect x="22" y="156.9" width="8" height="2" fill="#a9a9a9"/><rect x="12" y="164.7" width="18" height="2" fill="#a9a9a9"/><rect x="22" y="172.5" width="8" height="2" fill="#a9a9a9"/><rect x="22" y="180.3" width="8" height="2" fill="#a9a9a9"/><rect x="22" y="188.1" width="8" height="2" fill="#a9a9a9"/><rect x="12" y="195.9" width="18" height="2" fill="#a9a9a9"/><rect x="22" y="203.7" width="8" height="2" fill="#a9a9a9"/><rect x="22" y="211.5" width="8" height="2" fill="#a9a9a9"/><rect x="22" y="219.3" width="8" height="2" fill="#a9a9a9"/><rect x="12" y="227.1" width="18" height="2" fill="#a9a9a9"/><rect x="22" y="234.9" width="8" height="2" fill="#a9a9a9"/><rect x="22" y="242.7" width="8" height="2" fill="#a9a9a9"/><rect x="22" y="250.5" width="8" height="2" fill="#a9a9a9"/><rect x="12" y="258.3" width="18" height="2" fill="#a9a9a9"/><rect x="22" y="266.1" width="8" height="2" fill="#a9a9a9"/><rect x="22" y="273.9" width="8" height="2" fill="#a9a9a9"/><rect x="22" y="281.7" width="8" height="2" fill="#a9a9a9"/><rect x="12" y="289.5" width="18" height="2" fill="#a9a9a9"/><rect x="22" y="297.3" width="8" height="2" fill="#a9a9a9"/><rect x="22" y="305.1" width="8" height="2" fill="#a9a9a9"/><rect x="22" y="312.9" width="8" height="2" fill="#a9a9a9"/><rect x="12" y="320.7" width="18" height="2" fill="#a9a9a9"/><rect x="22" y="328.5" width="8" height="2" fill="#a9a9a9"/><rect x="22" y="336.3" width="8" height="2" fill="#a9a9a9"/><rect x="22" y="344.1" width="8" height="2" fill="#a9a9a9"/><rect x="12" y="351.9" width="18" height="2" fill="#a9a9a9"/><rect x="22" y="359.7" width="8" height="2" fill="#a9a9a9"/><rect x="22" y="367.5" width="8" height="2" fill="#a9a9a9"/><rect x="22" y="375.3" width="8" height="2" fill="#a9a9a9"/><rect x="12" y="383.1" width="18" height="2" fill="#a9a9a9"/><rect x="22" y="390.9" width="8" height="2" fill="#a9a9a9"/><rect x="22" y="398.7" width="8" height="2" fill="#a9a9a9"/><rect x="22" y="406.5" width="8" height="2" fill="#a9a9a9"/><rect x="12" y="414.3" width="18" height="2" fill="#a9a9a9"/><rect x="22" y="422.1" width="8" height="2" fill="#a9a9a9"/><rect x="22" y="429.9" width="8" height="2" fill="#a9a9a9"/><rect x="22" y="437.7" width="8" height="2" fill="#a9a9a9"/><rect x="12" y="445.5" width="18" height="2" fill="#a9a9a9"/><rect x="22" y="453.3" width="8" height="2" fill="#a9a9a9"/><rect x="22" y="461.1" width="8" height="2" fill="#a9a9a9"/><rect x="22" y="468.9" width="8" height="2" fill="#a9a9a9"/><rect x="12" y="476.7" width="18" height="2" fill="#a9a9a9"/><rect x="22" y="484.5" width="8" height="2" fill="#a9a9a9"/><rect x="22" y="492.3" width="8" height="2" fill="#a9a9a9"/><rect x="22" y="500.1" width="8" height="2" fill="#a9a9a9"/><rect x="12" y="507.9" width="18" height="2" fill="#a9a9a9"/><rect x="22" y="515.7" width="8" height="2" fill="#a9a9a9"/><rect x="22" y="523.5" width="8" height="2" fill="#a9a9a9"/><rect x="22" y="531.3" width="8" height="2" fill="#a9a9a9"/><rect x="12" y="539.1" width="18" height="2" fill="#a9a9a9"/><rect x="22" y="546.9" width="8" height="2" fill="#a9a9a9"/><rect x="22" y="554.7" width="8" height="2" fill="#a9a9a9"/><rect x="22" y="562.5" width="8" height="2" fill="#a9a9a9"/><rect x="12" y="570.3" width="18" height="2" fill="#a9a9a9"/><rect x="22" y="578.1" width="8" height="2" fill="#a9a9a9"/><rect x="22" y="585.9" width="8" height="2" fill="#a9a9a9"/><rect x="22" y="593.7" width="8" height="2" fill="#a9a9a9"/><rect x="12" y="601.5" width="18" height="2" fill="#a9a9a9"/><rect x="22" y="609.3" width="8" height="2" fill="#a9a9a9"/><rect x="22" y="617.1" width="8" height="2" fill="#a9a9a9"/><rect x="22" y="624.9" width="8" height="2" fill="#a9a9a9"/><rect x="12" y="632.7" width="18" height="2" fill="#a9a9a9"/><rect x="22" y="640.5" width="8" height="2" fill="#a9a9a9"/><rect x="22" y="648.3" width="8" height="2" fill="#a9a9a9"/><rect x="22" y="656.1" width="8" height="2" fill="#a9a9a9"/><rect x="12" y="663.9" width="18" height="2" fill="#a9a9a9"/><rect x="22" y="671.7" width="8" height="2" fill="#a9a9a9"/><rect x="22" y="679.5" width="8" height="2" fill="#a9a9a9"/><rect x="22" y="687.3" width="8" height="2" fill="#a9a9a9"/><rect x="12" y="695.1" width="18" height="2" fill="#a9a9a9"/><rect x="22" y="702.9" width="8" height="2" fill="#a9a9a9"/><rect x="22" y="710.7" width="8" height="2" fill="#a9a9a9"/><rect x="22" y="718.5" width="8" height="2" fill="#a9a9a9"/><rect x="12" y="726.3" width="18" height="2" fill="#a9a9a9"/><rect x="22" y="734.1" width="8" height="2" fill="#a9a9a9"/><rect x="22" y="741.9" width="8" height="2" fill="#a9a9a9"/><rect x="22" y="749.7" width="8" height="2" fill="#a9a9a9"/><rect x="12" y="757.5" width="18" height="2" fill="#a9a9a9"/><rect x="22" y="765.3" width="8" height="2" fill="#a9a9a9"/><rect x="22" y="773.1" width="8" height="2" fill="#a9a9a9"/><rect x="22" y="780.9" width="8" height="2" fill="#a9a9a9"/><rect x="12" y="788.7" width="18" height="2" fill="#a9a9a9"/><rect x="22" y="796.5" width="8" height="2" fill="#a9a9a9"/><rect x="22" y="804.3" width="8" height="2" fill="#a9a9a9"/><rect x="22" y="812.1" width="8" height="2" fill="#a9a9a9"/><rect x="12" y="819.9" width="18" height="2" fill="#a9a9a9"/><rect x="22" y="827.7" width="8" height="2" fill="#a9a9a9"/><rect x="22" y="835.5" width="8" height="2" fill="#a9a9a9"/><rect x="22" y="843.3" width="8" height="2" fill="#a9a9a9"/><rect x="12" y="851.1" width="18" height="2" fill="#a9a9a9"/><rect x="22" y="858.9" width="8" height="2" fill="#a9a9a9"/><rect x="22" y="866.7" width="8" height="2" fill="#a9a9a9"/><rect x="22" y="874.5" width="8" height="2" fill="#a9a9a9"/><rect x="12" y="882.3" width="18" height="2" fill="#a9a9a9"/><rect x="22" y="890.1" width="8" height="2" fill="#a9a9a9"/><rect x="22" y="897.9" width="8" height="2" fill="#a9a9a9"/><rect x="22" y="905.7" width="8" height="2" fill="#a9a9a9"/><rect x="12" y="913.5" width="18" height="2" fill="#a9a9a9"/><rect x="22" y="921.3" width="8" height="2" fill="#a9a9a9"/><rect x="22" y="929.1" width="8" height="2" fill="#a9a9a9"/><text x="0" y="0" transform="translate(15.8 24.3) rotate(-90)" font-family="Liberation Sans" font-size="18.5" fill="#ececec" text-anchor="middle">2</text><text x="0" y="0" transform="translate(15.8 55.5) rotate(-90)" font-family="Liberation Sans" font-size="18.5" fill="#ececec" text-anchor="middle">1</text><text x="0" y="0" transform="translate(15.8 117.9) rotate(-90)" font-family="Liberation Sans" font-size="18.5" fill="#ececec" text-anchor="middle">1</text><text x="0" y="0" transform="translate(15.8 149.1) rotate(-90)" font-family="Liberation Sans" font-size="18.5" fill="#ececec" text-anchor="middle">2</text><text x="0" y="0" transform="translate(15.8 180.3) rotate(-90)" font-family="Liberation Sans" font-size="18.5" fill="#ececec" text-anchor="middle">3</text><text x="0" y="0" transform="translate(15.8 211.5) rotate(-90)" font-family="Liberation Sans" font-size="18.5" fill="#ececec" text-anchor="middle">4</text><text x="0" y="0" transform="translate(15.8 242.7) rotate(-90)" font-family="Liberation Sans" font-size="18.5" fill="#ececec" text-anchor="middle">5</text><text x="0" y="0" transform="translate(15.8 273.9) rotate(-90)" font-family="Liberation Sans" font-size="18.5" fill="#ececec" text-anchor="middle">6</text><text x="0" y="0" transform="translate(15.8 305.1) rotate(-90)" font-family="Liberation Sans" font-size="18.5" fill="#ececec" text-anchor="middle">7</text><text x="0" y="0" transform="translate(15.8 336.3) rotate(-90)" font-family="Liberation Sans" font-size="18.5" fill="#ececec" text-anchor="middle">8</text><text x="0" y="0" transform="translate(15.8 367.5) rotate(-90)" font-family="Liberation Sans" font-size="18.5" fill="#ececec" text-anchor="middle">9</text><text x="0" y="0" transform="translate(15.8 398.7) rotate(-90)" font-family="Liberation Sans" font-size="18.5" fill="#ececec" text-anchor="middle">10</text><text x="0" y="0" transform="translate(15.8 429.9) rotate(-90)" font-family="Liberation Sans" font-size="18.5" fill="#ececec" text-anchor="middle">11</text><text x="0" y="0" transform="translate(15.8 461.1) rotate(-90)" font-family="Liberation Sans" font-size="18.5" fill="#ececec" text-anchor="middle">12</text><text x="0" y="0" transform="translate(15.8 492.3) rotate(-90)" font-family="Liberation Sans" font-size="18.5" fill="#ececec" text-anchor="middle">13</text><text x="0" y="0" transform="translate(15.8 523.5) rotate(-90)" font-family="Liberation Sans" font-size="18.5" fill="#ececec" text-anchor="middle">14</text><text x="0" y="0" transform="translate(15.8 554.7) rotate(-90)" font-family="Liberation Sans" font-size="18.5" fill="#ececec" text-anchor="middle">15</text><text x="0" y="0" transform="translate(15.8 585.9) rotate(-90)" font-family="Liberation Sans" font-size="18.5" fill="#ececec" text-anchor="middle">16</text><text x="0" y="0" transform="translate(15.8 617.1) rotate(-90)" font-family="Liberation Sans" font-size="18.5" fill="#ececec" text-anchor="middle">17</text><text x="0" y="0" transform="translate(15.8 648.3) rotate(-90)" font-family="Liberation Sans" font-size="18.5" fill="#ececec" text-anchor="middle">18</text><text x="0" y="0" transform="translate(15.8 679.5) rotate(-90)" font-family="Liberation Sans" font-size="18.5" fill="#ececec" text-anchor="middle">19</text><text x="0" y="0" transform="translate(15.8 710.7) rotate(-90)" font-family="Liberation Sans" font-size="18.5" fill="#ececec" text-anchor="middle">20</text><text x="0" y="0" transform="translate(15.8 741.9) rotate(-90)" font-family="Liberation Sans" font-size="18.5" fill="#ececec" text-anchor="middle">21</text><text x="0" y="0" transform="translate(15.8 773.1) rotate(-90)" font-family="Liberation Sans" font-size="18.5" fill="#ececec" text-anchor="middle">22</text><text x="0" y="0" transform="translate(15.8 804.3) rotate(-90)" font-family="Liberation Sans" font-size="18.5" fill="#ececec" text-anchor="middle">23</text><text x="0" y="0" transform="translate(15.8 835.5) rotate(-90)" font-family="Liberation Sans" font-size="18.5" fill="#ececec" text-anchor="middle">24</text><text x="0" y="0" transform="translate(15.8 866.7) rotate(-90)" font-family="Liberation Sans" font-size="18.5" fill="#ececec" text-anchor="middle">25</text><text x="0" y="0" transform="translate(15.8 897.9) rotate(-90)" font-family="Liberation Sans" font-size="18.5" fill="#ececec" text-anchor="middle">26</text><text x="0" y="0" transform="translate(15.8 929.1) rotate(-90)" font-family="Liberation Sans" font-size="18.5" fill="#ececec" text-anchor="middle">27</text></svg>
<svg style="position:absolute;left:377px;top:1793px;" width="33" height="36" viewBox="0 0 33 36"><path d="M7 14 V4 Q7 1.5 9.5 1.5 H20 L30 11.5 V31 Q30 33.5 27.5 33.5 H21" fill="none" stroke="#f0f0f0" stroke-width="2.2" stroke-linejoin="round"/><path d="M20 1.5 V9 Q20 11.5 22.5 11.5 H30" fill="none" stroke="#f0f0f0" stroke-width="2.2"/><circle cx="10" cy="27" r="8.5" fill="#f0f0f0"/><path d="M5.8 27 L8.8 30 L14.2 24.2" fill="none" stroke="#262626" stroke-width="2.2" stroke-linecap="round" stroke-linejoin="round"/></svg>
<svg style="position:absolute;left:752px;top:1793px;" width="35" height="35" viewBox="0 0 35 35"><circle cx="17.5" cy="17.5" r="15" fill="none" stroke="#f0f0f0" stroke-width="2.6"/><circle cx="17.5" cy="17.5" r="9.5" fill="#f0f0f0"/></svg>
<svg style="position:absolute;left:2105px;top:1797px;" width="26" height="26" viewBox="0 0 26 26"><path d="M2 24 L24 2 M2 13.5 V24 H12.5 M13.5 2 H24 V12.5" fill="none" stroke="#f0f0f0" stroke-width="2.3"/></svg>
<div style="position:absolute;left:2247.6px;top:1788px;width:62px;height:44px;border-radius:7px;background:#5e5e5e"></div>
<svg style="position:absolute;left:2265px;top:1793px;" width="27" height="34" viewBox="0 0 27 34"><path d="M1 3 Q1 1 3 1 H16 L26 11 V31 Q26 33 24 33 H3 Q1 33 1 31 Z" fill="#f4f4f4"/><path d="M16 1 V11 H26" fill="#5e5e5e"/><path d="M17 2.5 V10 H24.5" fill="#f4f4f4"/><path d="M6 18 H21 M6 22.5 H21 M6 27 H21" stroke="#5e5e5e" stroke-width="2"/></svg>
<svg style="position:absolute;left:2335px;top:1793px;" width="34" height="34" viewBox="0 0 34 34"><circle cx="17" cy="17" r="15.5" fill="none" stroke="#f0f0f0" stroke-width="2.3"/><ellipse cx="17" cy="17" rx="7" ry="15.5" fill="none" stroke="#f0f0f0" stroke-width="2.3"/><path d="M1.5 17 H32.5" stroke="#f0f0f0" stroke-width="2.1"/></svg>
<svg style="position:absolute;left:2406px;top:1796px;" width="36" height="25" viewBox="0 0 36 25"><path d="M1 2.3 H26 M1 12.4 H34 M1 22.8 H23.5" stroke="#f0f0f0" stroke-width="2.3"/></svg>
<svg style="position:absolute;left:2478px;top:1793px;" width="36" height="35" viewBox="0 0 36 35"><path d="M2 4 H17 M2 10 H14 M4 16 H11" stroke="#f0f0f0" stroke-width="2"/><path d="M3 33 L5 25 L26 3.5 Q29 0.5 32 3.5 Q35 6.5 32 9.5 L11 31 Z" fill="none" stroke="#f0f0f0" stroke-width="2.3" stroke-linejoin="round"/><path d="M23 6.5 L29 12.5" stroke="#f0f0f0" stroke-width="2.3"/></svg>
<div style="position:absolute;left:2545px;top:1809px;width:18px;height:2.5px;background:#f0f0f0;"></div>
<div style="position:absolute;left:2575.7px;top:1806.5px;width:200.2px;height:8.5px;border-radius:4.25px;background:#5a5a5a"></div>
<div style="position:absolute;left:2672.4px;top:1808px;width:6px;height:6px;border-radius:50%;background:#2e2e2e"></div>
<div style="position:absolute;left:2617.8px;top:1793.5px;width:32.4px;height:32.4px;border-radius:50%;background:#9b9b9b"></div>
<svg style="position:absolute;left:2789px;top:1801px;" width="19" height="19" viewBox="0 0 19 19"><path d="M9.5 1 V18 M1 9.5 H18" stroke="#f0f0f0" stroke-width="2.5"/></svg>
<div class="t d" id="t0" style="left:212.50px;top:632.29px;font-size:22px;font-weight:700;color:#8f8f8f;font-family:'Liberation Sans';transform:scaleX(0.8673);-webkit-text-stroke:0.6px #8f8f8f;">R&amp;Co</div>
<div class="t d" id="t1" style="left:212.50px;top:658.09px;font-size:22px;font-weight:700;color:#8f8f8f;font-family:'Liberation Sans';transform:scaleX(0.8178);-webkit-text-stroke:0.6px #8f8f8f;">Labs.</div>
<div class="t d" id="t2" style="left:886.50px;top:632.29px;font-size:22px;font-weight:700;color:#8f8f8f;font-family:'Liberation Sans';transform:scaleX(0.8673);-webkit-text-stroke:0.6px #8f8f8f;">R&amp;Co</div>
<div class="t d" id="t3" style="left:886.50px;top:658.09px;font-size:22px;font-weight:700;color:#8f8f8f;font-family:'Liberation Sans';transform:scaleX(0.8178);-webkit-text-stroke:0.6px #8f8f8f;">Labs.</div>
<div class="t d" id="t4" style="left:1560.50px;top:632.29px;font-size:22px;font-weight:700;color:#8f8f8f;font-family:'Liberation Sans';transform:scaleX(0.8673);-webkit-text-stroke:0.6px #8f8f8f;">R&amp;Co</div>
<div class="t d" id="t5" style="left:1560.50px;top:658.09px;font-size:22px;font-weight:700;color:#8f8f8f;font-family:'Liberation Sans';transform:scaleX(0.8178);-webkit-text-stroke:0.6px #8f8f8f;">Labs.</div>
<div class="t d" id="t6" style="left:2234.50px;top:632.29px;font-size:22px;font-weight:700;color:#8f8f8f;font-family:'Liberation Sans';transform:scaleX(0.8673);-webkit-text-stroke:0.6px #8f8f8f;">R&amp;Co</div>
<div class="t d" id="t7" style="left:2234.50px;top:658.09px;font-size:22px;font-weight:700;color:#8f8f8f;font-family:'Liberation Sans';transform:scaleX(0.8178);-webkit-text-stroke:0.6px #8f8f8f;">Labs.</div>
<div class="t" id="t8" style="left:713.00px;top:681.63px;font-size:14px;font-weight:700;color:#fff;font-family:'Liberation Sans';transform:scaleX(0.8666);">2024</div>
<div class="t d" id="t9" style="left:272.70px;top:891.67px;font-size:45px;font-weight:700;color:#000;font-family:'Liberation Sans';transform:scaleX(0.8655);-webkit-text-stroke:0.8px #000;">Email Formulas To Get</div>
<div class="t d" id="t10" style="left:318.70px;top:944.07px;font-size:45px;font-weight:700;color:#000;font-family:'Liberation Sans';transform:scaleX(0.8546);-webkit-text-stroke:0.8px #000;">Investor Attention</div>
<div class="t d" id="t11" style="left:433.00px;top:1472.13px;font-size:13px;font-weight:400;color:#8a8a8a;font-family:'Liberation Sans';transform:scaleX(0.8770);">©2024 R&amp;Co Labs.</div>
<div class="t d" id="t12" style="left:886.40px;top:759.75px;font-size:20.5px;font-weight:700;color:#000;font-family:'Liberation Sans';transform:scaleX(0.8296);-webkit-text-stroke:0.4px #000;">1. The Potent Formula</div>
<div class="t d" id="t13" style="left:885.50px;top:813.77px;font-size:15.5px;font-weight:400;color:#000;font-family:'Liberation Sans';transform:scaleX(0.8769);-webkit-text-stroke:0.25px #000;"><b>To:</b> Investor Name</div>
<div class="t d" id="t14" style="left:886.00px;top:843.87px;font-size:15.5px;font-weight:400;color:#000;font-family:'Liberation Sans';transform:scaleX(0.8766);-webkit-text-stroke:0.25px #000;"><b>Subject Line:</b> Your Full Name &amp; WhatsApp Number</div>
<div class="t d" id="t15" style="left:886.00px;top:906.47px;font-size:15.5px;font-weight:400;color:#000;font-family:'Liberation Sans';transform:scaleX(0.8870);-webkit-text-stroke:0.25px #000;">I'm the CEO of [Startup<sup style="font-size:0.55em;vertical-align:0.6em;line-height:0">1</sup>], we launched [x] months ago. Our traction is [x], we are growing</div>
<div class="t d" id="t16" style="left:886.00px;top:924.57px;font-size:15.5px;font-weight:400;color:#000;font-family:'Liberation Sans';transform:scaleX(0.9031);-webkit-text-stroke:0.25px #000;">like [x], our margins are [x], our customers are [x].</div>
<div class="t d" id="t17" style="left:886.00px;top:986.47px;font-size:15.5px;font-weight:400;color:#000;font-family:'Liberation Sans';transform:scaleX(0.8709);-webkit-text-stroke:0.25px #000;">Because of your investment in [Portfolio company], I believe you would be interested in the</div>
<div class="t d" id="t18" style="left:886.00px;top:1003.77px;font-size:15.5px;font-weight:400;color:#000;font-family:'Liberation Sans';transform:scaleX(0.8995);-webkit-text-stroke:0.25px #000;">round we are raising currently.</div>
<div class="t d" id="t19" style="left:886.00px;top:1066.27px;font-size:15.5px;font-weight:400;color:#000;font-family:'Liberation Sans';transform:scaleX(0.8916);-webkit-text-stroke:0.25px #000;">Let me know if you’d like to know more.</div>
<div class="t d" id="t20" style="left:886.00px;top:1097.67px;font-size:15.5px;font-weight:400;color:#000;font-family:'Liberation Sans';transform:scaleX(0.8839);-webkit-text-stroke:0.25px #000;">Kind regards,</div>
<div class="t d" id="t21" style="left:886.00px;top:1127.37px;font-size:15.5px;font-weight:400;color:#000;font-family:'Liberation Sans';transform:scaleX(0.9195);-webkit-text-stroke:0.25px #000;">[Your Name]</div>
<div class="t d" id="t22" style="left:886.50px;top:1407.66px;font-size:7px;font-weight:400;color:#555;font-family:'Liberation Sans';">1</div>
<div class="t d" id="t23" style="left:892.30px;top:1408.89px;font-size:12.5px;font-weight:400;color:#555;font-family:'Liberation Sans';transform:scaleX(0.9007);-webkit-text-stroke:0.2px #555;">Link to company website</div>
<div class="t d" id="t24" style="left:1069.80px;top:1478.03px;font-size:13px;font-weight:400;color:#8a8a8a;font-family:'Liberation Sans';transform:scaleX(0.8841);">©2024 R&amp;Co Labs.</div>
<div class="t d" id="t25" style="left:1559.80px;top:759.45px;font-size:20.5px;font-weight:700;color:#000;font-family:'Liberation Sans';transform:scaleX(0.8494);-webkit-text-stroke:0.4px #000;">2. The Y Combinator Formula</div>
<div class="t d" id="t26" style="left:1559.80px;top:814.67px;font-size:15.5px;font-weight:400;color:#000;font-family:'Liberation Sans';transform:scaleX(0.8730);-webkit-text-stroke:0.25px #000;"><b>To:</b> Investor Name</div>
<div class="t d" id="t27" style="left:1559.80px;top:844.37px;font-size:15.5px;font-weight:400;color:#000;font-family:'Liberation Sans';transform:scaleX(0.8678);-webkit-text-stroke:0.25px #000;"><b>Subject Line:</b> [Startup] helps [Target Customer] solve [Problem]</div>
<div class="t d" id="t28" style="left:1559.80px;top:906.27px;font-size:15.5px;font-weight:400;color:#000;font-family:'Liberation Sans';transform:scaleX(0.8882);-webkit-text-stroke:0.25px #000;">Most [Target Customer] we know struggle with [Problem], and hate [Pain Point].</div>
<div class="t d" id="t29" style="left:1559.80px;top:968.97px;font-size:15.5px;font-weight:400;color:#000;font-family:'Liberation Sans';transform:scaleX(0.9316);-webkit-text-stroke:0.25px #000;">As [Team Background], We’ve built this [Product] that [Solves particular aspect of the</div>
<div class="t d" id="t30" style="left:1559.80px;top:986.67px;font-size:15.5px;font-weight:400;color:#000;font-family:'Liberation Sans';transform:scaleX(0.9114);-webkit-text-stroke:0.25px #000;">problem].</div>
<div class="t d" id="t31" style="left:1559.80px;top:1048.47px;font-size:15.5px;font-weight:400;color:#000;font-family:'Liberation Sans';transform:scaleX(0.8962);-webkit-text-stroke:0.25px #000;">Up to date, [Startup] has already achieved [traction], delivery [Positive result]</div>
<div class="t d" id="t32" style="left:1559.80px;top:1110.37px;font-size:15.5px;font-weight:400;color:#000;font-family:'Liberation Sans';transform:scaleX(0.8845);-webkit-text-stroke:0.25px #000;">We think you can help us get [specific milestone] with your [Fund expertise]</div>
<div class="t d" id="t33" style="left:1559.80px;top:1172.57px;font-size:15.5px;font-weight:400;color:#000;font-family:'Liberation Sans';transform:scaleX(0.8537);-webkit-text-stroke:0.25px #000;">Best regards,</div>
<div class="t d" id="t34" style="left:1559.80px;top:1203.97px;font-size:15.5px;font-weight:400;color:#000;font-family:'Liberation Sans';transform:scaleX(0.9160);-webkit-text-stroke:0.25px #000;">[Your Name]</div>
<div class="t d" id="t35" style="left:1743.80px;top:1478.23px;font-size:13px;font-weight:400;color:#8a8a8a;font-family:'Liberation Sans';transform:scaleX(0.8841);">©2024 R&amp;Co Labs.</div>
<div class="t d" id="t36" style="left:2233.90px;top:759.85px;font-size:20.5px;font-weight:700;color:#000;font-family:'Liberation Sans';transform:scaleX(0.8426);-webkit-text-stroke:0.4px #000;">3. The Shark Tank Formula</div>
<div class="t d" id="t37" style="left:2233.90px;top:831.77px;font-size:15.5px;font-weight:400;color:#000;font-family:'Liberation Sans';transform:scaleX(0.8714);-webkit-text-stroke:0.25px #000;"><b>To:</b> Investor Name</div>
<div class="t d" id="t38" style="left:2233.90px;top:863.57px;font-size:15.5px;font-weight:400;color:#000;font-family:'Liberation Sans';transform:scaleX(0.8066);-webkit-text-stroke:0.25px #000;"><b>Subject Line:</b></div>
<div class="t d" id="t39" style="left:2233.90px;top:926.27px;font-size:15.5px;font-weight:400;color:#000;font-family:'Liberation Sans';transform:scaleX(0.9084);-webkit-text-stroke:0.25px #000;">I’m [Name], CEO of [Startup].</div>
<div class="t d" id="t40" style="left:2233.90px;top:987.87px;font-size:15.5px;font-weight:400;color:#000;font-family:'Liberation Sans';transform:scaleX(0.8845);-webkit-text-stroke:0.25px #000;">We know that [x number of target customers] use [Existing product]</div>
<div class="t d" id="t41" style="left:2233.90px;top:1019.57px;font-size:15.5px;font-weight:400;color:#000;font-family:'Liberation Sans';transform:scaleX(0.8917);-webkit-text-stroke:0.25px #000;">But these [products] have a [big problem] :</div>
<div class="t d" id="t42" style="left:2253.50px;top:1049.97px;font-size:15.5px;font-weight:400;color:#000;font-family:'Liberation Sans';">-</div>
<div class="t d" id="t43" style="left:2274.90px;top:1049.97px;font-size:15.5px;font-weight:400;color:#000;font-family:'Liberation Sans';transform:scaleX(0.8903);-webkit-text-stroke:0.25px #000;">[ Pain point 1]</div>
<div class="t d" id="t44" style="left:2253.50px;top:1068.57px;font-size:15.5px;font-weight:400;color:#000;font-family:'Liberation Sans';">-</div>
<div class="t d" id="t45" style="left:2274.90px;top:1068.57px;font-size:15.5px;font-weight:400;color:#000;font-family:'Liberation Sans';transform:scaleX(0.8903);-webkit-text-stroke:0.25px #000;">[ Pain point 2]</div>
<div class="t d" id="t46" style="left:2253.50px;top:1086.27px;font-size:15.5px;font-weight:400;color:#000;font-family:'Liberation Sans';">-</div>
<div class="t d" id="t47" style="left:2274.90px;top:1086.27px;font-size:15.5px;font-weight:400;color:#000;font-family:'Liberation Sans';transform:scaleX(0.8903);-webkit-text-stroke:0.25px #000;">[ Pain point 3]</div>
<div class="t d" id="t48" style="left:2233.90px;top:1116.17px;font-size:15.5px;font-weight:400;color:#000;font-family:'Liberation Sans';transform:scaleX(0.8857);-webkit-text-stroke:0.25px #000;">That’s why we built [Product].</div>
<div class="t d" id="t49" style="left:2233.90px;top:1178.27px;font-size:15.5px;font-weight:400;color:#000;font-family:'Liberation Sans';transform:scaleX(0.8949);-webkit-text-stroke:0.25px #000;">[Product] helps you do [Benefit] without having to [Obstacle].</div>
<div class="t d" id="t50" style="left:2233.90px;top:1209.97px;font-size:15.5px;font-weight:400;color:#000;font-family:'Liberation Sans';transform:scaleX(0.9194);-webkit-text-stroke:0.25px #000;">We’re currently at [Milestone] and we’re raising [x amount] to achieve [Next milestone]</div>
<div class="t d" id="t51" style="left:2233.90px;top:1227.97px;font-size:15.5px;font-weight:400;color:#000;font-family:'Liberation Sans';transform:scaleX(0.8771);-webkit-text-stroke:0.25px #000;">within [Estimated Period].</div>
<div class="t d" id="t52" style="left:2233.90px;top:1290.17px;font-size:15.5px;font-weight:400;color:#000;font-family:'Liberation Sans';transform:scaleX(0.9026);-webkit-text-stroke:0.25px #000;">If you’re interested, we’d be happy to provide more details.</div>
<div class="t d" id="t53" style="left:2233.90px;top:1351.77px;font-size:15.5px;font-weight:400;color:#000;font-family:'Liberation Sans';transform:scaleX(0.8580);-webkit-text-stroke:0.25px #000;">Thank you,</div>
<div class="t d" id="t54" style="left:2233.90px;top:1381.97px;font-size:15.5px;font-weight:400;color:#000;font-family:'Liberation Sans';transform:scaleX(0.9171);-webkit-text-stroke:0.25px #000;">[Your Name]</div>
<div class="t d" id="t55" style="left:2417.70px;top:1478.43px;font-size:13px;font-weight:400;color:#8a8a8a;font-family:'Liberation Sans';transform:scaleX(0.8841);">©2024 R&amp;Co Labs.</div>
<div class="t" id="t56" style="left:42.70px;top:27.18px;font-size:23px;font-weight:700;color:#dcdcdc;font-family:'Liberation Sans';transform:scaleX(0.9360);">AutoSave</div>
<div class="t" id="t57" style="left:1061.00px;top:26.27px;font-size:25px;font-weight:400;color:#fff;font-family:'Liberation Sans';transform:scaleX(1.0047);-webkit-text-stroke:0.35px #fff;">R&amp;Co Labs - Email Formulas To Get Investor Attention</div>
<div class="t" id="t58" style="left:1676.70px;top:26.27px;font-size:25px;font-weight:400;color:#bdbdbd;font-family:'Liberation Sans';transform:scaleX(0.9690);">— Saved to my Mac</div>
<div class="t" id="t59" style="left:2350.00px;top:27.92px;font-size:25.5px;font-weight:700;color:#9d9d9d;font-family:'Liberation Sans';transform:scaleX(0.9782);">Search (Cmd + Ctrl + U)</div>
<div class="t" id="t60" style="left:23.00px;top:89.34px;font-size:27.8px;font-weight:700;color:#e0e0e0;font-family:'Liberation Sans';transform:scaleX(0.9581);">Home</div>
<div class="t" id="t61" style="left:145.00px;top:89.34px;font-size:27.8px;font-weight:700;color:#e0e0e0;font-family:'Liberation Sans';transform:scaleX(0.9247);">Insert</div>
<div class="t" id="t62" style="left:267.00px;top:89.34px;font-size:27.8px;font-weight:700;color:#e0e0e0;font-family:'Liberation Sans';transform:scaleX(0.9120);">Draw</div>
<div class="t" id="t63" style="left:379.00px;top:89.34px;font-size:27.8px;font-weight:700;color:#e0e0e0;font-family:'Liberation Sans';transform:scaleX(0.9063);">Design</div>
<div class="t" id="t64" style="left:513.00px;top:89.34px;font-size:27.8px;font-weight:700;color:#e0e0e0;font-family:'Liberation Sans';transform:scaleX(0.9108);">Layout</div>
<div class="t" id="t65" style="left:645.00px;top:89.34px;font-size:27.8px;font-weight:700;color:#e0e0e0;font-family:'Liberation Sans';transform:scaleX(0.9340);">References</div>
<div class="t" id="t66" style="left:836.80px;top:89.34px;font-size:27.8px;font-weight:700;color:#e0e0e0;font-family:'Liberation Sans';transform:scaleX(0.9190);">Mailings</div>
<div class="t" id="t67" style="left:989.00px;top:89.34px;font-size:27.8px;font-weight:700;color:#e0e0e0;font-family:'Liberation Sans';transform:scaleX(0.9082);">Review</div>
<div class="t" id="t68" style="left:1125.00px;top:89.34px;font-size:27.8px;font-weight:700;color:#e0e0e0;font-family:'Liberation Sans';transform:scaleX(0.9388);">View</div>
<div class="t" id="t69" style="left:2363.00px;top:94.27px;font-size:26px;font-weight:400;color:#f4f4f4;font-family:'Liberation Sans';transform:scaleX(1.0262);-webkit-text-stroke:0.7px #f4f4f4;">Comments</div>
<div class="t" id="t70" style="left:2593.00px;top:94.27px;font-size:26px;font-weight:400;color:#f4f4f4;font-family:'Liberation Sans';transform:scaleX(1.0314);-webkit-text-stroke:0.7px #f4f4f4;">Editing</div>
<div class="t" id="t71" style="left:2804.40px;top:94.27px;font-size:26px;font-weight:400;color:#fff;font-family:'Liberation Sans';transform:scaleX(0.9886);-webkit-text-stroke:0.7px #fff;">Share</div>
<div class="t" id="t72" style="left:40.80px;top:221.69px;font-size:22px;font-weight:400;color:#f0f0f0;font-family:'Liberation Sans';transform:scaleX(0.9633);-webkit-text-stroke:0.4px #f0f0f0;">Paste</div>
<div class="t" id="t73" style="left:219.00px;top:163.78px;font-size:25px;font-weight:400;color:#f4f4f4;font-family:'Liberation Sans';transform:scaleX(0.9770);">Futura</div>
<div class="t" id="t74" style="left:420.40px;top:163.78px;font-size:25px;font-weight:400;color:#f4f4f4;font-family:'Liberation Sans';transform:scaleX(0.8989);">16</div>
<div class="t" id="t75" style="left:222.50px;top:224.81px;font-size:27.5px;font-weight:700;color:#dcdcdc;font-family:'Liberation Sans';transform:scaleX(0.7547);">B</div>
<div class="t" id="t76" style="left:397.90px;top:228.27px;font-size:26px;font-weight:400;color:#d8d8d8;font-family:'Liberation Sans';transform:scaleX(0.8229);">ab</div>
<div class="t" id="t77" style="left:454.80px;top:227.38px;font-size:25px;font-weight:700;color:#dcdcdc;font-family:'Liberation Sans';transform:scaleX(0.9852);">x</div>
<div class="t" id="t78" style="left:470.00px;top:245.78px;font-size:13.5px;font-weight:700;color:#4a90d9;font-family:'Liberation Sans';transform:scaleX(0.8915);">2</div>
<div class="t" id="t79" style="left:506.90px;top:227.38px;font-size:25px;font-weight:700;color:#dcdcdc;font-family:'Liberation Sans';transform:scaleX(0.9852);">x</div>
<div class="t" id="t80" style="left:521.70px;top:223.98px;font-size:13.5px;font-weight:700;color:#4a90d9;font-family:'Liberation Sans';transform:scaleX(0.8915);">2</div>
<div class="t d" id="t81" style="left:1609.50px;top:178.35px;font-size:19.5px;font-weight:400;color:#000;font-family:'Liberation Sans';transform:scaleX(0.9964);font-family:'Liberation Serif';font-style:italic;-webkit-text-stroke:0.45px #000;">AaBbCcDdEe</div>
<div class="t" id="t82" style="left:1629.10px;top:223.96px;font-size:17.5px;font-weight:400;color:#1a1a1a;font-family:'Liberation Sans';transform:scaleX(1.0872);">Address</div>
<div class="t d" id="t83" style="left:1762.25px;top:178.35px;font-size:19.5px;font-weight:400;color:#000;font-family:'Liberation Sans';transform:scaleX(1.1070);font-family:'Liberation Serif';-webkit-text-stroke:0.45px #000;">AaBbCcDdEe</div>
<div class="t" id="t84" style="left:1782.50px;top:223.96px;font-size:17.5px;font-weight:400;color:#1a1a1a;font-family:'Liberation Sans';transform:scaleX(1.0845);">Body Text</div>
<div class="t d" id="t85" style="left:1957.50px;top:184.95px;font-size:10px;font-weight:400;color:#000;font-family:'Liberation Sans';transform:scaleX(0.8590);">AaBbCcDdEe</div>
<div class="t" id="t86" style="left:1940.50px;top:223.96px;font-size:17.5px;font-weight:400;color:#1a1a1a;font-family:'Liberation Sans';transform:scaleX(1.0650);">Disclaimer</div>
<div class="t d" id="t87" style="left:2082.25px;top:178.35px;font-size:19.5px;font-weight:400;color:#000;font-family:'Liberation Sans';transform:scaleX(1.1070);font-family:'Liberation Serif';-webkit-text-stroke:0.45px #000;">AaBbCcDdEe</div>
<div class="t" id="t88" style="left:2093.50px;top:223.96px;font-size:17.5px;font-weight:400;color:#1a1a1a;font-family:'Liberation Sans';transform:scaleX(1.0813);">Body Single</div>
<div class="t d" id="t89" style="left:2250.50px;top:178.81px;font-size:19px;font-weight:400;color:#000;font-family:'Liberation Sans';transform:scaleX(0.9127);-webkit-text-stroke:0.45px #000;">AaBbCcDdEe</div>
<div class="t" id="t90" style="left:2257.00px;top:223.96px;font-size:17.5px;font-weight:400;color:#1a1a1a;font-family:'Liberation Sans';transform:scaleX(1.0389);">No Spacing</div>
<div class="t" id="t91" style="left:2428.00px;top:223.00px;font-size:21px;font-weight:400;color:#f0f0f0;font-family:'Liberation Sans';transform:scaleX(1.0667);-webkit-text-stroke:0.65px #f0f0f0;">Styles</div>
<div class="t" id="t92" style="left:2435.00px;top:246.60px;font-size:21px;font-weight:400;color:#f0f0f0;font-family:'Liberation Sans';transform:scaleX(0.9685);-webkit-text-stroke:0.65px #f0f0f0;">Pane</div>
<div class="t" id="t93" style="left:2542.00px;top:223.00px;font-size:21px;font-weight:400;color:#f0f0f0;font-family:'Liberation Sans';transform:scaleX(1.0940);-webkit-text-stroke:0.65px #f0f0f0;">Dictate</div>
<div class="t" id="t94" style="left:2665.50px;top:223.00px;font-size:21px;font-weight:400;color:#f0f0f0;font-family:'Liberation Sans';transform:scaleX(1.0884);-webkit-text-stroke:0.65px #f0f0f0;">Add-ins</div>
<div class="t" id="t95" style="left:2796.00px;top:223.00px;font-size:21px;font-weight:400;color:#f0f0f0;font-family:'Liberation Sans';transform:scaleX(1.0755);-webkit-text-stroke:0.65px #f0f0f0;">Editor</div>
<div class="t" id="t96" style="left:49.80px;top:1797.33px;font-size:24.5px;font-weight:400;color:#ececec;font-family:'Liberation Sans';transform:scaleX(1.0229);">Page 4 of 4</div>
<div class="t" id="t97" style="left:221.40px;top:1797.33px;font-size:24.5px;font-weight:400;color:#ececec;font-family:'Liberation Sans';transform:scaleX(1.0359);">250 words</div>
<div class="t" id="t98" style="left:452.70px;top:1797.33px;font-size:24.5px;font-weight:400;color:#ececec;font-family:'Liberation Sans';transform:scaleX(1.0308);">English (United States)</div>
<div class="t" id="t99" style="left:2153.50px;top:1797.33px;font-size:24.5px;font-weight:400;color:#ececec;font-family:'Liberation Sans';transform:scaleX(1.0027);">Focus</div>
<div class="t" id="t100" style="left:2840.60px;top:1797.33px;font-size:24.5px;font-weight:400;color:#ececec;font-family:'Liberation Sans';transform:scaleX(1.0235);">55%</div>
</body></html>
